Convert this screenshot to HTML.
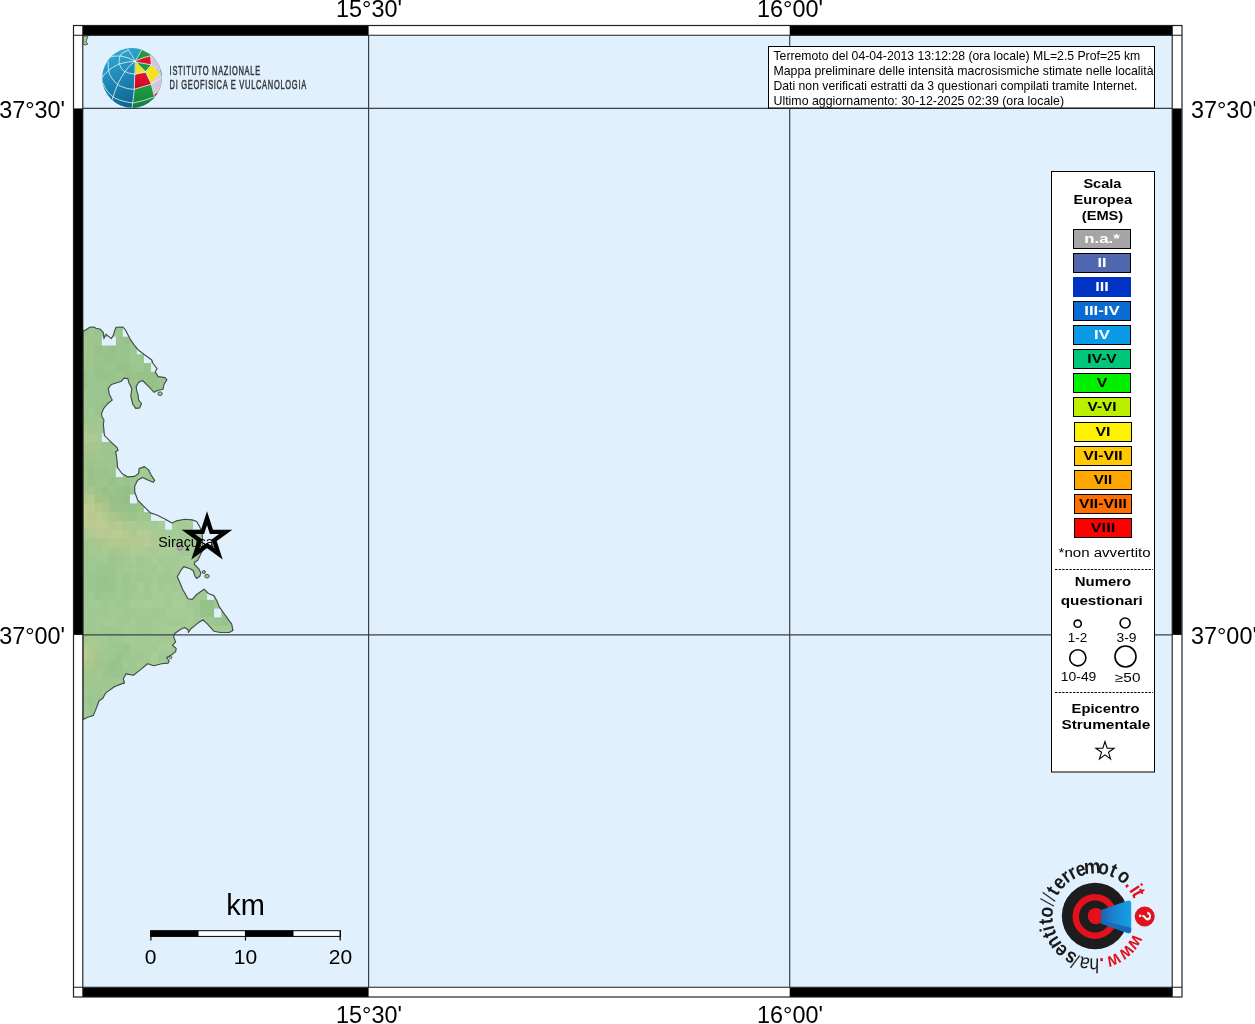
<!DOCTYPE html>
<html><head><meta charset="utf-8"><style>
html,body{margin:0;padding:0;background:#fff;width:1255px;height:1024px;overflow:hidden}
svg{display:block;will-change:transform}
text{font-family:"Liberation Sans",sans-serif}
</style></head><body>
<svg width="1255" height="1024" viewBox="0 0 1255 1024">
<defs>
<clipPath id="landclip"><path d="M83,330.7 L84.4,330.7 L89.8,327.3 L93.7,327 L96.1,328.3 L100.5,329.3 L103.4,332.7 L103.9,338.6 L105.9,334.2 L108.3,336.1 L111.3,338.6 L113.2,335.6 L114.7,330.7 L116.1,327.3 L123,327 L125.9,330.7 L129.8,338.6 L133.7,344.4 L138.6,350.3 L144.5,354.7 L151.8,360 L152.8,363 L157.1,368.8 L155.2,371.8 L158.1,376.6 L165,377.6 L166.9,379.6 L164,384.5 L163,389.3 L158.1,390.3 L154.2,392.3 L148.4,386.4 L142.5,380.5 L138.6,382.5 L136.2,386.4 L136.6,390.3 L138.1,395.2 L138.6,400.1 L141.5,403.5 L139.6,407.9 L135.7,408.4 L132.7,404 L130.8,396.2 L131.8,388.4 L128.8,382.5 L127.9,378.6 L124,378.1 L121,381.5 L111.3,384.5 L108.3,388.4 L109.3,394.2 L112.2,400.1 L107.3,404 L103.4,408.9 L101.5,413.9 L102,416.8 L103.9,419.8 L103.4,424.6 L104.4,435.4 L107.3,438.3 L112.2,443.2 L117.1,447.6 L118.1,450.5 L115.6,451.5 L116.1,453.9 L117.1,460.8 L117.6,467.6 L122,473.5 L127.9,476.9 L134.7,476.4 L138.6,473.5 L139.1,468.6 L144.5,466.6 L148.4,469.6 L151.3,475.4 L154.7,480.3 L153.2,482.3 L148.4,480.3 L142.5,477.4 L137.6,480.3 L134.7,486.2 L134.7,492 L137.6,499.8 L142.9,505.4 L150.4,512.9 L156.9,515 L165.4,519.3 L171.9,523.1 L176.2,520.9 L184.8,519.3 L192.3,519.9 L196.6,521.5 L199.8,526.9 L202,532.2 L203,549.4 L199.8,555.9 L197.7,560.2 L194.5,562.3 L194.5,564.5 L198.8,568.8 L200.9,573 L199.8,576.3 L196.6,578.4 L194.5,575.2 L193.4,570.9 L190.2,568.8 L183.7,566.6 L180.5,570.9 L177.3,576.8 L179.4,581.6 L182.6,589.2 L188,598.8 L192.3,599.4 L196.6,594.5 L204.1,589.2 L208.4,593.5 L213.8,595.6 L217,601 L219,606.4 L225.3,615.3 L231.7,624.2 L233,630.6 L229.2,632.5 L220.2,632.5 L213.9,631.2 L207.5,624.2 L203,619.8 L197.3,623.6 L190.9,628.7 L188.4,632.5 L188.4,630 L184.5,627.4 L180.7,629.3 L174.3,633.8 L173.7,637 L175.6,642.1 L172.4,645.3 L176.2,648.4 L175.6,651.6 L171.8,654.8 L166.7,657.4 L169.2,661.2 L168,663.1 L161.6,663.7 L153.9,665.7 L147.6,663.7 L139.9,670.1 L133.5,675.2 L125.9,673.9 L123.3,679 L124.6,682.9 L120.8,684.1 L114.4,686.7 L105.5,693.1 L102.9,698.2 L99.1,700.7 L95.3,710.9 L93.4,715.4 L87.6,717.3 L83.8,719.2 L83,719.5 Z"/></clipPath>
<clipPath id="mapclip"><rect x="83" y="36" width="1089" height="951"/></clipPath>
<linearGradient id="blueg" x1="0" y1="0" x2="1" y2="0">
<stop offset="0" stop-color="#1a64b4"/><stop offset="0.45" stop-color="#1a86d2"/><stop offset="1" stop-color="#14a0e6"/>
</linearGradient>
<linearGradient id="globeb" x1="0.2" y1="0" x2="0.6" y2="1">
<stop offset="0" stop-color="#34aed6"/><stop offset="0.55" stop-color="#1a82b0"/><stop offset="1" stop-color="#0a5a84"/>
</linearGradient>
<linearGradient id="redg" x1="0" y1="0" x2="0" y2="1"><stop offset="0" stop-color="#ec1028"/><stop offset="1" stop-color="#c40a2a"/></linearGradient>
<linearGradient id="greeng" x1="0" y1="0" x2="0" y2="1"><stop offset="0" stop-color="#22a03c"/><stop offset="1" stop-color="#0e7a44"/></linearGradient>
<clipPath id="globeclip"><circle cx="132" cy="77.9" r="29.8"/></clipPath>
<path id="hsitcirc" d="M 1095,916 m 34,20 A 39.5,39.5 0 1 1 1129.2,935.8"/>
</defs>
<!-- sea -->
<rect x="83" y="36" width="1089" height="951" fill="#e0f1fd"/>
<g clip-path="url(#mapclip)">
<path d="M83,330.7 L84.4,330.7 L89.8,327.3 L93.7,327 L96.1,328.3 L100.5,329.3 L103.4,332.7 L103.9,338.6 L105.9,334.2 L108.3,336.1 L111.3,338.6 L113.2,335.6 L114.7,330.7 L116.1,327.3 L123,327 L125.9,330.7 L129.8,338.6 L133.7,344.4 L138.6,350.3 L144.5,354.7 L151.8,360 L152.8,363 L157.1,368.8 L155.2,371.8 L158.1,376.6 L165,377.6 L166.9,379.6 L164,384.5 L163,389.3 L158.1,390.3 L154.2,392.3 L148.4,386.4 L142.5,380.5 L138.6,382.5 L136.2,386.4 L136.6,390.3 L138.1,395.2 L138.6,400.1 L141.5,403.5 L139.6,407.9 L135.7,408.4 L132.7,404 L130.8,396.2 L131.8,388.4 L128.8,382.5 L127.9,378.6 L124,378.1 L121,381.5 L111.3,384.5 L108.3,388.4 L109.3,394.2 L112.2,400.1 L107.3,404 L103.4,408.9 L101.5,413.9 L102,416.8 L103.9,419.8 L103.4,424.6 L104.4,435.4 L107.3,438.3 L112.2,443.2 L117.1,447.6 L118.1,450.5 L115.6,451.5 L116.1,453.9 L117.1,460.8 L117.6,467.6 L122,473.5 L127.9,476.9 L134.7,476.4 L138.6,473.5 L139.1,468.6 L144.5,466.6 L148.4,469.6 L151.3,475.4 L154.7,480.3 L153.2,482.3 L148.4,480.3 L142.5,477.4 L137.6,480.3 L134.7,486.2 L134.7,492 L137.6,499.8 L142.9,505.4 L150.4,512.9 L156.9,515 L165.4,519.3 L171.9,523.1 L176.2,520.9 L184.8,519.3 L192.3,519.9 L196.6,521.5 L199.8,526.9 L202,532.2 L203,549.4 L199.8,555.9 L197.7,560.2 L194.5,562.3 L194.5,564.5 L198.8,568.8 L200.9,573 L199.8,576.3 L196.6,578.4 L194.5,575.2 L193.4,570.9 L190.2,568.8 L183.7,566.6 L180.5,570.9 L177.3,576.8 L179.4,581.6 L182.6,589.2 L188,598.8 L192.3,599.4 L196.6,594.5 L204.1,589.2 L208.4,593.5 L213.8,595.6 L217,601 L219,606.4 L225.3,615.3 L231.7,624.2 L233,630.6 L229.2,632.5 L220.2,632.5 L213.9,631.2 L207.5,624.2 L203,619.8 L197.3,623.6 L190.9,628.7 L188.4,632.5 L188.4,630 L184.5,627.4 L180.7,629.3 L174.3,633.8 L173.7,637 L175.6,642.1 L172.4,645.3 L176.2,648.4 L175.6,651.6 L171.8,654.8 L166.7,657.4 L169.2,661.2 L168,663.1 L161.6,663.7 L153.9,665.7 L147.6,663.7 L139.9,670.1 L133.5,675.2 L125.9,673.9 L123.3,679 L124.6,682.9 L120.8,684.1 L114.4,686.7 L105.5,693.1 L102.9,698.2 L99.1,700.7 L95.3,710.9 L93.4,715.4 L87.6,717.3 L83.8,719.2 L83,719.5 Z" fill="#a4cb96"/>
<g clip-path="url(#landclip)">
<rect x="73.76" y="319.18" width="7.02" height="8.77" fill="#9fc791"/>
<rect x="80.78" y="319.18" width="7.02" height="8.77" fill="#9fc892"/>
<rect x="87.80" y="319.18" width="7.02" height="8.77" fill="#9dc690"/>
<rect x="94.82" y="319.18" width="7.02" height="8.77" fill="#9dc790"/>
<rect x="101.84" y="319.18" width="7.02" height="8.77" fill="#9dc690"/>
<rect x="108.86" y="319.18" width="14.04" height="8.77" fill="#9ac38c"/>
<rect x="122.90" y="319.18" width="7.02" height="8.77" fill="#a0c992"/>
<rect x="129.92" y="319.18" width="7.02" height="8.77" fill="#9dc690"/>
<rect x="136.94" y="319.18" width="7.02" height="8.77" fill="#9fc791"/>
<rect x="143.96" y="319.18" width="7.02" height="8.77" fill="#a4cc97"/>
<rect x="150.98" y="319.18" width="7.02" height="8.77" fill="#a2ca94"/>
<rect x="158.00" y="319.18" width="7.02" height="8.77" fill="#a5cc97"/>
<rect x="165.02" y="319.18" width="7.02" height="8.77" fill="#a3ca95"/>
<rect x="172.04" y="319.18" width="7.02" height="8.77" fill="#a5cc97"/>
<rect x="179.06" y="319.18" width="7.02" height="8.77" fill="#a2c994"/>
<rect x="186.08" y="319.18" width="7.02" height="8.77" fill="#a5cc97"/>
<rect x="193.10" y="319.18" width="7.02" height="8.77" fill="#a6cd98"/>
<rect x="200.12" y="319.18" width="7.02" height="8.77" fill="#a4cb96"/>
<rect x="207.14" y="319.18" width="14.04" height="8.77" fill="#a5cc97"/>
<rect x="221.18" y="319.18" width="7.02" height="8.77" fill="#a1c893"/>
<rect x="228.20" y="319.18" width="7.02" height="8.77" fill="#a6cd98"/>
<rect x="235.22" y="319.18" width="7.02" height="8.77" fill="#a5cc97"/>
<rect x="73.76" y="327.95" width="7.02" height="8.77" fill="#9ec690"/>
<rect x="80.78" y="327.95" width="7.02" height="8.77" fill="#9bc48d"/>
<rect x="87.80" y="327.95" width="7.02" height="8.77" fill="#9ec791"/>
<rect x="94.82" y="327.95" width="7.02" height="8.77" fill="#9ac48d"/>
<rect x="101.84" y="327.95" width="7.02" height="8.77" fill="#9bc58e"/>
<rect x="108.86" y="327.95" width="14.04" height="8.77" fill="#9cc68f"/>
<rect x="122.90" y="327.95" width="7.02" height="8.77" fill="#9ec891"/>
<rect x="129.92" y="327.95" width="7.02" height="8.77" fill="#9dc68f"/>
<rect x="136.94" y="327.95" width="7.02" height="8.77" fill="#a1c993"/>
<rect x="143.96" y="327.95" width="7.02" height="8.77" fill="#a0c893"/>
<rect x="150.98" y="327.95" width="7.02" height="8.77" fill="#a4cc97"/>
<rect x="158.00" y="327.95" width="7.02" height="8.77" fill="#a5cc97"/>
<rect x="165.02" y="327.95" width="7.02" height="8.77" fill="#a1c893"/>
<rect x="172.04" y="327.95" width="7.02" height="8.77" fill="#a1c994"/>
<rect x="179.06" y="327.95" width="7.02" height="8.77" fill="#a2c994"/>
<rect x="186.08" y="327.95" width="7.02" height="8.77" fill="#a7ce99"/>
<rect x="193.10" y="327.95" width="7.02" height="8.77" fill="#a4cb96"/>
<rect x="200.12" y="327.95" width="7.02" height="8.77" fill="#a5cc97"/>
<rect x="207.14" y="327.95" width="7.02" height="8.77" fill="#a3ca95"/>
<rect x="214.16" y="327.95" width="7.02" height="8.77" fill="#a4cb96"/>
<rect x="221.18" y="327.95" width="14.04" height="8.77" fill="#a3ca95"/>
<rect x="235.22" y="327.95" width="7.02" height="8.77" fill="#a5cc97"/>
<rect x="73.76" y="336.72" width="7.02" height="8.77" fill="#9fc791"/>
<rect x="80.78" y="336.72" width="7.02" height="8.77" fill="#a0c891"/>
<rect x="87.80" y="336.72" width="7.02" height="8.77" fill="#9cc58e"/>
<rect x="94.82" y="336.72" width="7.02" height="8.77" fill="#9cc68f"/>
<rect x="101.84" y="336.72" width="7.02" height="8.77" fill="#9bc58d"/>
<rect x="108.86" y="336.72" width="7.02" height="8.77" fill="#9bc68e"/>
<rect x="115.88" y="336.72" width="7.02" height="8.77" fill="#9ac48d"/>
<rect x="122.90" y="336.72" width="7.02" height="8.77" fill="#99c28b"/>
<rect x="129.92" y="336.72" width="7.02" height="8.77" fill="#9fc891"/>
<rect x="136.94" y="336.72" width="7.02" height="8.77" fill="#a1ca94"/>
<rect x="143.96" y="336.72" width="7.02" height="8.77" fill="#a2cb95"/>
<rect x="150.98" y="336.72" width="7.02" height="8.77" fill="#a2ca94"/>
<rect x="158.00" y="336.72" width="7.02" height="8.77" fill="#a4cb96"/>
<rect x="165.02" y="336.72" width="7.02" height="8.77" fill="#a1c994"/>
<rect x="172.04" y="336.72" width="7.02" height="8.77" fill="#a6cd98"/>
<rect x="179.06" y="336.72" width="7.02" height="8.77" fill="#a4cb96"/>
<rect x="186.08" y="336.72" width="7.02" height="8.77" fill="#a3ca95"/>
<rect x="193.10" y="336.72" width="7.02" height="8.77" fill="#a1c893"/>
<rect x="200.12" y="336.72" width="7.02" height="8.77" fill="#a6cd98"/>
<rect x="207.14" y="336.72" width="7.02" height="8.77" fill="#a7ce99"/>
<rect x="214.16" y="336.72" width="7.02" height="8.77" fill="#a2c994"/>
<rect x="221.18" y="336.72" width="7.02" height="8.77" fill="#a6cd98"/>
<rect x="228.20" y="336.72" width="7.02" height="8.77" fill="#a3ca95"/>
<rect x="235.22" y="336.72" width="7.02" height="8.77" fill="#a2c994"/>
<rect x="73.76" y="345.49" width="7.02" height="8.77" fill="#a0c58e"/>
<rect x="80.78" y="345.49" width="7.02" height="8.77" fill="#a3c78f"/>
<rect x="87.80" y="345.49" width="7.02" height="8.77" fill="#a0c68e"/>
<rect x="94.82" y="345.49" width="7.02" height="8.77" fill="#97c088"/>
<rect x="101.84" y="345.49" width="7.02" height="8.77" fill="#99c38b"/>
<rect x="108.86" y="345.49" width="7.02" height="8.77" fill="#95c088"/>
<rect x="115.88" y="345.49" width="7.02" height="8.77" fill="#9ac48d"/>
<rect x="122.90" y="345.49" width="7.02" height="8.77" fill="#99c38c"/>
<rect x="129.92" y="345.49" width="7.02" height="8.77" fill="#9ec891"/>
<rect x="136.94" y="345.49" width="7.02" height="8.77" fill="#a1c993"/>
<rect x="143.96" y="345.49" width="7.02" height="8.77" fill="#9fc892"/>
<rect x="150.98" y="345.49" width="7.02" height="8.77" fill="#a4cc96"/>
<rect x="158.00" y="345.49" width="7.02" height="8.77" fill="#a1c993"/>
<rect x="165.02" y="345.49" width="7.02" height="8.77" fill="#a0c893"/>
<rect x="172.04" y="345.49" width="7.02" height="8.77" fill="#a4cb96"/>
<rect x="179.06" y="345.49" width="7.02" height="8.77" fill="#a1c893"/>
<rect x="186.08" y="345.49" width="7.02" height="8.77" fill="#a2c994"/>
<rect x="193.10" y="345.49" width="7.02" height="8.77" fill="#a3ca95"/>
<rect x="200.12" y="345.49" width="7.02" height="8.77" fill="#a5cc97"/>
<rect x="207.14" y="345.49" width="7.02" height="8.77" fill="#a2c994"/>
<rect x="214.16" y="345.49" width="7.02" height="8.77" fill="#a1c893"/>
<rect x="221.18" y="345.49" width="7.02" height="8.77" fill="#a6cd98"/>
<rect x="228.20" y="345.49" width="7.02" height="8.77" fill="#a3ca95"/>
<rect x="235.22" y="345.49" width="7.02" height="8.77" fill="#a7ce99"/>
<rect x="73.76" y="354.26" width="7.02" height="8.77" fill="#a4c891"/>
<rect x="80.78" y="354.26" width="7.02" height="8.77" fill="#a3c48c"/>
<rect x="87.80" y="354.26" width="7.02" height="8.77" fill="#a0c48b"/>
<rect x="94.82" y="354.26" width="7.02" height="8.77" fill="#9bc38b"/>
<rect x="101.84" y="354.26" width="14.04" height="8.77" fill="#99c38c"/>
<rect x="115.88" y="354.26" width="7.02" height="8.77" fill="#99c48c"/>
<rect x="122.90" y="354.26" width="7.02" height="8.77" fill="#9bc58e"/>
<rect x="129.92" y="354.26" width="7.02" height="8.77" fill="#9ec891"/>
<rect x="136.94" y="354.26" width="7.02" height="8.77" fill="#9dc68f"/>
<rect x="143.96" y="354.26" width="7.02" height="8.77" fill="#9dc690"/>
<rect x="150.98" y="354.26" width="7.02" height="8.77" fill="#a0c993"/>
<rect x="158.00" y="354.26" width="7.02" height="8.77" fill="#9fc791"/>
<rect x="165.02" y="354.26" width="7.02" height="8.77" fill="#a1c993"/>
<rect x="172.04" y="354.26" width="7.02" height="8.77" fill="#a6cd98"/>
<rect x="179.06" y="354.26" width="14.04" height="8.77" fill="#a4cb96"/>
<rect x="193.10" y="354.26" width="7.02" height="8.77" fill="#a1c893"/>
<rect x="200.12" y="354.26" width="7.02" height="8.77" fill="#a3ca95"/>
<rect x="207.14" y="354.26" width="7.02" height="8.77" fill="#a4cb96"/>
<rect x="214.16" y="354.26" width="7.02" height="8.77" fill="#a1c893"/>
<rect x="221.18" y="354.26" width="14.04" height="8.77" fill="#a5cc97"/>
<rect x="235.22" y="354.26" width="7.02" height="8.77" fill="#a1c893"/>
<rect x="73.76" y="363.03" width="7.02" height="8.77" fill="#9fc68f"/>
<rect x="80.78" y="363.03" width="14.04" height="8.77" fill="#9ec58d"/>
<rect x="94.82" y="363.03" width="7.02" height="8.77" fill="#99c28b"/>
<rect x="101.84" y="363.03" width="7.02" height="8.77" fill="#9ac48d"/>
<rect x="108.86" y="363.03" width="7.02" height="8.77" fill="#9ac58d"/>
<rect x="115.88" y="363.03" width="7.02" height="8.77" fill="#97c18a"/>
<rect x="122.90" y="363.03" width="7.02" height="8.77" fill="#98c28b"/>
<rect x="129.92" y="363.03" width="7.02" height="8.77" fill="#9cc68f"/>
<rect x="136.94" y="363.03" width="7.02" height="8.77" fill="#9dc790"/>
<rect x="143.96" y="363.03" width="7.02" height="8.77" fill="#98c28b"/>
<rect x="150.98" y="363.03" width="7.02" height="8.77" fill="#9ac48d"/>
<rect x="158.00" y="363.03" width="7.02" height="8.77" fill="#9ec791"/>
<rect x="165.02" y="363.03" width="7.02" height="8.77" fill="#a0c892"/>
<rect x="172.04" y="363.03" width="7.02" height="8.77" fill="#a2c994"/>
<rect x="179.06" y="363.03" width="7.02" height="8.77" fill="#a2ca95"/>
<rect x="186.08" y="363.03" width="7.02" height="8.77" fill="#a3ca95"/>
<rect x="193.10" y="363.03" width="7.02" height="8.77" fill="#a5cc97"/>
<rect x="200.12" y="363.03" width="14.04" height="8.77" fill="#a3ca95"/>
<rect x="214.16" y="363.03" width="7.02" height="8.77" fill="#a6cd98"/>
<rect x="221.18" y="363.03" width="7.02" height="8.77" fill="#a1c893"/>
<rect x="228.20" y="363.03" width="7.02" height="8.77" fill="#a4cb96"/>
<rect x="235.22" y="363.03" width="7.02" height="8.77" fill="#a5cc97"/>
<rect x="73.76" y="371.80" width="7.02" height="8.77" fill="#9bc48e"/>
<rect x="80.78" y="371.80" width="7.02" height="8.77" fill="#9ac38c"/>
<rect x="87.80" y="371.80" width="7.02" height="8.77" fill="#9cc68f"/>
<rect x="94.82" y="371.80" width="7.02" height="8.77" fill="#98c28b"/>
<rect x="101.84" y="371.80" width="7.02" height="8.77" fill="#98c28a"/>
<rect x="108.86" y="371.80" width="7.02" height="8.77" fill="#9ac38c"/>
<rect x="115.88" y="371.80" width="7.02" height="8.77" fill="#9cc68f"/>
<rect x="122.90" y="371.80" width="7.02" height="8.77" fill="#99c28b"/>
<rect x="129.92" y="371.80" width="7.02" height="8.77" fill="#99c38c"/>
<rect x="136.94" y="371.80" width="7.02" height="8.77" fill="#96c189"/>
<rect x="143.96" y="371.80" width="7.02" height="8.77" fill="#97c38a"/>
<rect x="150.98" y="371.80" width="7.02" height="8.77" fill="#96c189"/>
<rect x="158.00" y="371.80" width="7.02" height="8.77" fill="#9dc68f"/>
<rect x="165.02" y="371.80" width="7.02" height="8.77" fill="#9dc690"/>
<rect x="172.04" y="371.80" width="7.02" height="8.77" fill="#a1c993"/>
<rect x="179.06" y="371.80" width="7.02" height="8.77" fill="#a4cc96"/>
<rect x="186.08" y="371.80" width="7.02" height="8.77" fill="#a6cd98"/>
<rect x="193.10" y="371.80" width="7.02" height="8.77" fill="#a4cb96"/>
<rect x="200.12" y="371.80" width="14.04" height="8.77" fill="#a2c994"/>
<rect x="214.16" y="371.80" width="7.02" height="8.77" fill="#a4cb96"/>
<rect x="221.18" y="371.80" width="7.02" height="8.77" fill="#a2c994"/>
<rect x="228.20" y="371.80" width="14.04" height="8.77" fill="#a6cd98"/>
<rect x="73.76" y="380.57" width="7.02" height="8.77" fill="#9ac48d"/>
<rect x="80.78" y="380.57" width="7.02" height="8.77" fill="#9ac38c"/>
<rect x="87.80" y="380.57" width="7.02" height="8.77" fill="#9cc68f"/>
<rect x="94.82" y="380.57" width="7.02" height="8.77" fill="#9bc58e"/>
<rect x="101.84" y="380.57" width="7.02" height="8.77" fill="#9cc68f"/>
<rect x="108.86" y="380.57" width="7.02" height="8.77" fill="#9ac48d"/>
<rect x="115.88" y="380.57" width="7.02" height="8.77" fill="#99c38c"/>
<rect x="122.90" y="380.57" width="7.02" height="8.77" fill="#9bc48d"/>
<rect x="129.92" y="380.57" width="7.02" height="8.77" fill="#9cc68f"/>
<rect x="136.94" y="380.57" width="7.02" height="8.77" fill="#97c18a"/>
<rect x="143.96" y="380.57" width="7.02" height="8.77" fill="#95c088"/>
<rect x="150.98" y="380.57" width="7.02" height="8.77" fill="#96c189"/>
<rect x="158.00" y="380.57" width="7.02" height="8.77" fill="#9ac48d"/>
<rect x="165.02" y="380.57" width="7.02" height="8.77" fill="#9fc791"/>
<rect x="172.04" y="380.57" width="7.02" height="8.77" fill="#a5cc97"/>
<rect x="179.06" y="380.57" width="7.02" height="8.77" fill="#a1c993"/>
<rect x="186.08" y="380.57" width="7.02" height="8.77" fill="#a1c893"/>
<rect x="193.10" y="380.57" width="7.02" height="8.77" fill="#a7ce99"/>
<rect x="200.12" y="380.57" width="7.02" height="8.77" fill="#a6cd98"/>
<rect x="207.14" y="380.57" width="7.02" height="8.77" fill="#a7ce99"/>
<rect x="214.16" y="380.57" width="7.02" height="8.77" fill="#a4cb96"/>
<rect x="221.18" y="380.57" width="14.04" height="8.77" fill="#a7ce99"/>
<rect x="235.22" y="380.57" width="7.02" height="8.77" fill="#a2c994"/>
<rect x="73.76" y="389.34" width="7.02" height="8.77" fill="#9ec791"/>
<rect x="80.78" y="389.34" width="7.02" height="8.77" fill="#9ec790"/>
<rect x="87.80" y="389.34" width="7.02" height="8.77" fill="#9cc68f"/>
<rect x="94.82" y="389.34" width="7.02" height="8.77" fill="#9bc58e"/>
<rect x="101.84" y="389.34" width="7.02" height="8.77" fill="#9ac38d"/>
<rect x="108.86" y="389.34" width="14.04" height="8.77" fill="#9bc48e"/>
<rect x="122.90" y="389.34" width="7.02" height="8.77" fill="#9bc48d"/>
<rect x="129.92" y="389.34" width="7.02" height="8.77" fill="#9ec790"/>
<rect x="136.94" y="389.34" width="7.02" height="8.77" fill="#9bc48d"/>
<rect x="143.96" y="389.34" width="7.02" height="8.77" fill="#9dc790"/>
<rect x="150.98" y="389.34" width="7.02" height="8.77" fill="#99c38c"/>
<rect x="158.00" y="389.34" width="7.02" height="8.77" fill="#a1ca93"/>
<rect x="165.02" y="389.34" width="7.02" height="8.77" fill="#a2ca95"/>
<rect x="172.04" y="389.34" width="7.02" height="8.77" fill="#a5cd98"/>
<rect x="179.06" y="389.34" width="14.04" height="8.77" fill="#a6cd98"/>
<rect x="193.10" y="389.34" width="7.02" height="8.77" fill="#a4cb96"/>
<rect x="200.12" y="389.34" width="7.02" height="8.77" fill="#a1c893"/>
<rect x="207.14" y="389.34" width="7.02" height="8.77" fill="#a5cc97"/>
<rect x="214.16" y="389.34" width="7.02" height="8.77" fill="#a2c994"/>
<rect x="221.18" y="389.34" width="7.02" height="8.77" fill="#a3ca95"/>
<rect x="228.20" y="389.34" width="7.02" height="8.77" fill="#a5cc97"/>
<rect x="235.22" y="389.34" width="7.02" height="8.77" fill="#a4cb96"/>
<rect x="73.76" y="398.11" width="7.02" height="8.77" fill="#9dc68f"/>
<rect x="80.78" y="398.11" width="7.02" height="8.77" fill="#9fc892"/>
<rect x="87.80" y="398.11" width="7.02" height="8.77" fill="#9dc68f"/>
<rect x="94.82" y="398.11" width="7.02" height="8.77" fill="#9bc48e"/>
<rect x="101.84" y="398.11" width="7.02" height="8.77" fill="#9bc48d"/>
<rect x="108.86" y="398.11" width="7.02" height="8.77" fill="#9fc892"/>
<rect x="115.88" y="398.11" width="7.02" height="8.77" fill="#9ec790"/>
<rect x="122.90" y="398.11" width="7.02" height="8.77" fill="#a0c993"/>
<rect x="129.92" y="398.11" width="7.02" height="8.77" fill="#9ec791"/>
<rect x="136.94" y="398.11" width="7.02" height="8.77" fill="#9ec690"/>
<rect x="143.96" y="398.11" width="7.02" height="8.77" fill="#a0c892"/>
<rect x="150.98" y="398.11" width="7.02" height="8.77" fill="#a2ca95"/>
<rect x="158.00" y="398.11" width="7.02" height="8.77" fill="#a0c792"/>
<rect x="165.02" y="398.11" width="7.02" height="8.77" fill="#a5cc97"/>
<rect x="172.04" y="398.11" width="21.06" height="8.77" fill="#a6cd98"/>
<rect x="193.10" y="398.11" width="7.02" height="8.77" fill="#a1c893"/>
<rect x="200.12" y="398.11" width="7.02" height="8.77" fill="#a5cc97"/>
<rect x="207.14" y="398.11" width="7.02" height="8.77" fill="#a6cd98"/>
<rect x="214.16" y="398.11" width="7.02" height="8.77" fill="#a1c893"/>
<rect x="221.18" y="398.11" width="14.04" height="8.77" fill="#a3ca95"/>
<rect x="235.22" y="398.11" width="7.02" height="8.77" fill="#a4cb96"/>
<rect x="73.76" y="406.88" width="7.02" height="8.77" fill="#9ec790"/>
<rect x="80.78" y="406.88" width="7.02" height="8.77" fill="#9ec690"/>
<rect x="87.80" y="406.88" width="7.02" height="8.77" fill="#9fc892"/>
<rect x="94.82" y="406.88" width="7.02" height="8.77" fill="#9ac38d"/>
<rect x="101.84" y="406.88" width="7.02" height="8.77" fill="#9bc48d"/>
<rect x="108.86" y="406.88" width="7.02" height="8.77" fill="#9cc58e"/>
<rect x="115.88" y="406.88" width="7.02" height="8.77" fill="#9dc58f"/>
<rect x="122.90" y="406.88" width="7.02" height="8.77" fill="#9dc690"/>
<rect x="129.92" y="406.88" width="7.02" height="8.77" fill="#a4cc96"/>
<rect x="136.94" y="406.88" width="7.02" height="8.77" fill="#a4cb96"/>
<rect x="143.96" y="406.88" width="7.02" height="8.77" fill="#a0c792"/>
<rect x="150.98" y="406.88" width="7.02" height="8.77" fill="#a3ca95"/>
<rect x="158.00" y="406.88" width="7.02" height="8.77" fill="#a2c994"/>
<rect x="165.02" y="406.88" width="7.02" height="8.77" fill="#a2ca94"/>
<rect x="172.04" y="406.88" width="7.02" height="8.77" fill="#a3ca95"/>
<rect x="179.06" y="406.88" width="7.02" height="8.77" fill="#a5cc97"/>
<rect x="186.08" y="406.88" width="7.02" height="8.77" fill="#a4cb96"/>
<rect x="193.10" y="406.88" width="7.02" height="8.77" fill="#a3ca95"/>
<rect x="200.12" y="406.88" width="7.02" height="8.77" fill="#a2c994"/>
<rect x="207.14" y="406.88" width="7.02" height="8.77" fill="#a3ca95"/>
<rect x="214.16" y="406.88" width="7.02" height="8.77" fill="#a2c994"/>
<rect x="221.18" y="406.88" width="7.02" height="8.77" fill="#a4cb96"/>
<rect x="228.20" y="406.88" width="7.02" height="8.77" fill="#a5cc97"/>
<rect x="235.22" y="406.88" width="7.02" height="8.77" fill="#a3ca95"/>
<rect x="73.76" y="415.65" width="7.02" height="8.77" fill="#9dc58f"/>
<rect x="80.78" y="415.65" width="7.02" height="8.77" fill="#9ec68f"/>
<rect x="87.80" y="415.65" width="7.02" height="8.77" fill="#9ec690"/>
<rect x="94.82" y="415.65" width="7.02" height="8.77" fill="#9fc892"/>
<rect x="101.84" y="415.65" width="7.02" height="8.77" fill="#a1c993"/>
<rect x="108.86" y="415.65" width="7.02" height="8.77" fill="#9fc791"/>
<rect x="115.88" y="415.65" width="14.04" height="8.77" fill="#a2ca94"/>
<rect x="129.92" y="415.65" width="7.02" height="8.77" fill="#a1c993"/>
<rect x="136.94" y="415.65" width="7.02" height="8.77" fill="#a2c994"/>
<rect x="143.96" y="415.65" width="7.02" height="8.77" fill="#a3ca95"/>
<rect x="150.98" y="415.65" width="7.02" height="8.77" fill="#a4cc96"/>
<rect x="158.00" y="415.65" width="7.02" height="8.77" fill="#a3ca95"/>
<rect x="165.02" y="415.65" width="7.02" height="8.77" fill="#a5cc97"/>
<rect x="172.04" y="415.65" width="7.02" height="8.77" fill="#a4cb96"/>
<rect x="179.06" y="415.65" width="7.02" height="8.77" fill="#a2c994"/>
<rect x="186.08" y="415.65" width="7.02" height="8.77" fill="#a4cb96"/>
<rect x="193.10" y="415.65" width="7.02" height="8.77" fill="#a5cc97"/>
<rect x="200.12" y="415.65" width="7.02" height="8.77" fill="#a1c893"/>
<rect x="207.14" y="415.65" width="14.04" height="8.77" fill="#a4cb96"/>
<rect x="221.18" y="415.65" width="7.02" height="8.77" fill="#a6cd98"/>
<rect x="228.20" y="415.65" width="7.02" height="8.77" fill="#a7ce99"/>
<rect x="235.22" y="415.65" width="7.02" height="8.77" fill="#a3ca95"/>
<rect x="73.76" y="424.42" width="7.02" height="8.77" fill="#a6cb95"/>
<rect x="80.78" y="424.42" width="7.02" height="8.77" fill="#aaca93"/>
<rect x="87.80" y="424.42" width="7.02" height="8.77" fill="#a4c790"/>
<rect x="94.82" y="424.42" width="7.02" height="8.77" fill="#a1c892"/>
<rect x="101.84" y="424.42" width="7.02" height="8.77" fill="#9ec690"/>
<rect x="108.86" y="424.42" width="7.02" height="8.77" fill="#a2ca95"/>
<rect x="115.88" y="424.42" width="7.02" height="8.77" fill="#a2ca94"/>
<rect x="122.90" y="424.42" width="14.04" height="8.77" fill="#a4cc96"/>
<rect x="136.94" y="424.42" width="7.02" height="8.77" fill="#a4cb96"/>
<rect x="143.96" y="424.42" width="7.02" height="8.77" fill="#a5cc97"/>
<rect x="150.98" y="424.42" width="7.02" height="8.77" fill="#a4cb96"/>
<rect x="158.00" y="424.42" width="7.02" height="8.77" fill="#a1c893"/>
<rect x="165.02" y="424.42" width="7.02" height="8.77" fill="#a4cb96"/>
<rect x="172.04" y="424.42" width="7.02" height="8.77" fill="#a1c893"/>
<rect x="179.06" y="424.42" width="7.02" height="8.77" fill="#a2c994"/>
<rect x="186.08" y="424.42" width="7.02" height="8.77" fill="#a6cd98"/>
<rect x="193.10" y="424.42" width="7.02" height="8.77" fill="#a1c893"/>
<rect x="200.12" y="424.42" width="14.04" height="8.77" fill="#a2c994"/>
<rect x="214.16" y="424.42" width="7.02" height="8.77" fill="#a6cd98"/>
<rect x="221.18" y="424.42" width="7.02" height="8.77" fill="#a2c994"/>
<rect x="228.20" y="424.42" width="7.02" height="8.77" fill="#a1c893"/>
<rect x="235.22" y="424.42" width="7.02" height="8.77" fill="#a6cd98"/>
<rect x="73.76" y="433.19" width="7.02" height="8.77" fill="#a6c78f"/>
<rect x="80.78" y="433.19" width="7.02" height="8.77" fill="#b4cb92"/>
<rect x="87.80" y="433.19" width="7.02" height="8.77" fill="#aec991"/>
<rect x="94.82" y="433.19" width="7.02" height="8.77" fill="#a5ca93"/>
<rect x="101.84" y="433.19" width="7.02" height="8.77" fill="#a3cb95"/>
<rect x="108.86" y="433.19" width="7.02" height="8.77" fill="#a1c994"/>
<rect x="115.88" y="433.19" width="7.02" height="8.77" fill="#a3cb96"/>
<rect x="122.90" y="433.19" width="7.02" height="8.77" fill="#9fc792"/>
<rect x="129.92" y="433.19" width="7.02" height="8.77" fill="#a4cc96"/>
<rect x="136.94" y="433.19" width="7.02" height="8.77" fill="#a3ca95"/>
<rect x="143.96" y="433.19" width="7.02" height="8.77" fill="#a5cc97"/>
<rect x="150.98" y="433.19" width="7.02" height="8.77" fill="#a1c893"/>
<rect x="158.00" y="433.19" width="7.02" height="8.77" fill="#a5cc97"/>
<rect x="165.02" y="433.19" width="7.02" height="8.77" fill="#a6ce98"/>
<rect x="172.04" y="433.19" width="7.02" height="8.77" fill="#a1c893"/>
<rect x="179.06" y="433.19" width="7.02" height="8.77" fill="#a3ca95"/>
<rect x="186.08" y="433.19" width="7.02" height="8.77" fill="#a4cb96"/>
<rect x="193.10" y="433.19" width="7.02" height="8.77" fill="#a6cd98"/>
<rect x="200.12" y="433.19" width="21.06" height="8.77" fill="#a2c994"/>
<rect x="221.18" y="433.19" width="7.02" height="8.77" fill="#a5cc97"/>
<rect x="228.20" y="433.19" width="7.02" height="8.77" fill="#a6cd98"/>
<rect x="235.22" y="433.19" width="7.02" height="8.77" fill="#a3ca95"/>
<rect x="73.76" y="441.96" width="7.02" height="8.77" fill="#a8c790"/>
<rect x="80.78" y="441.96" width="7.02" height="8.77" fill="#acc78e"/>
<rect x="87.80" y="441.96" width="7.02" height="8.77" fill="#a9c68e"/>
<rect x="94.82" y="441.96" width="7.02" height="8.77" fill="#a3c78f"/>
<rect x="101.84" y="441.96" width="7.02" height="8.77" fill="#9ec58f"/>
<rect x="108.86" y="441.96" width="7.02" height="8.77" fill="#a0c892"/>
<rect x="115.88" y="441.96" width="7.02" height="8.77" fill="#a4cc96"/>
<rect x="122.90" y="441.96" width="7.02" height="8.77" fill="#a2c994"/>
<rect x="129.92" y="441.96" width="7.02" height="8.77" fill="#a4cc96"/>
<rect x="136.94" y="441.96" width="7.02" height="8.77" fill="#a1c893"/>
<rect x="143.96" y="441.96" width="21.06" height="8.77" fill="#a5cc97"/>
<rect x="165.02" y="441.96" width="14.04" height="8.77" fill="#a4cb96"/>
<rect x="179.06" y="441.96" width="7.02" height="8.77" fill="#a5cc97"/>
<rect x="186.08" y="441.96" width="7.02" height="8.77" fill="#a6cd98"/>
<rect x="193.10" y="441.96" width="14.04" height="8.77" fill="#a2c994"/>
<rect x="207.14" y="441.96" width="7.02" height="8.77" fill="#a5cc97"/>
<rect x="214.16" y="441.96" width="7.02" height="8.77" fill="#a6cd98"/>
<rect x="221.18" y="441.96" width="14.04" height="8.77" fill="#a4cb96"/>
<rect x="235.22" y="441.96" width="7.02" height="8.77" fill="#a5cc97"/>
<rect x="73.76" y="450.73" width="7.02" height="8.77" fill="#a4c58d"/>
<rect x="80.78" y="450.73" width="7.02" height="8.77" fill="#a6c48b"/>
<rect x="87.80" y="450.73" width="7.02" height="8.77" fill="#a3c38a"/>
<rect x="94.82" y="450.73" width="7.02" height="8.77" fill="#a1c68e"/>
<rect x="101.84" y="450.73" width="7.02" height="8.77" fill="#9dc58e"/>
<rect x="108.86" y="450.73" width="7.02" height="8.77" fill="#9dc68f"/>
<rect x="115.88" y="450.73" width="7.02" height="8.77" fill="#a2ca94"/>
<rect x="122.90" y="450.73" width="7.02" height="8.77" fill="#a4cc97"/>
<rect x="129.92" y="450.73" width="7.02" height="8.77" fill="#a1c993"/>
<rect x="136.94" y="450.73" width="7.02" height="8.77" fill="#a4cc96"/>
<rect x="143.96" y="450.73" width="7.02" height="8.77" fill="#a3ca95"/>
<rect x="150.98" y="450.73" width="7.02" height="8.77" fill="#a6cd98"/>
<rect x="158.00" y="450.73" width="7.02" height="8.77" fill="#a4cb96"/>
<rect x="165.02" y="450.73" width="7.02" height="8.77" fill="#a2ca94"/>
<rect x="172.04" y="450.73" width="7.02" height="8.77" fill="#a2c994"/>
<rect x="179.06" y="450.73" width="7.02" height="8.77" fill="#a1c893"/>
<rect x="186.08" y="450.73" width="7.02" height="8.77" fill="#a4cb96"/>
<rect x="193.10" y="450.73" width="7.02" height="8.77" fill="#a3ca95"/>
<rect x="200.12" y="450.73" width="7.02" height="8.77" fill="#a2c994"/>
<rect x="207.14" y="450.73" width="14.04" height="8.77" fill="#a3ca95"/>
<rect x="221.18" y="450.73" width="7.02" height="8.77" fill="#a6cd98"/>
<rect x="228.20" y="450.73" width="7.02" height="8.77" fill="#a2c994"/>
<rect x="235.22" y="450.73" width="7.02" height="8.77" fill="#a7ce99"/>
<rect x="73.76" y="459.50" width="7.02" height="8.77" fill="#9fc58e"/>
<rect x="80.78" y="459.50" width="7.02" height="8.77" fill="#9fc48c"/>
<rect x="87.80" y="459.50" width="7.02" height="8.77" fill="#9cc38b"/>
<rect x="94.82" y="459.50" width="7.02" height="8.77" fill="#9dc58d"/>
<rect x="101.84" y="459.50" width="7.02" height="8.77" fill="#9dc68f"/>
<rect x="108.86" y="459.50" width="7.02" height="8.77" fill="#9ec690"/>
<rect x="115.88" y="459.50" width="7.02" height="8.77" fill="#9fc791"/>
<rect x="122.90" y="459.50" width="7.02" height="8.77" fill="#a2ca94"/>
<rect x="129.92" y="459.50" width="7.02" height="8.77" fill="#a4cb96"/>
<rect x="136.94" y="459.50" width="7.02" height="8.77" fill="#a2c994"/>
<rect x="143.96" y="459.50" width="7.02" height="8.77" fill="#a4cc96"/>
<rect x="150.98" y="459.50" width="7.02" height="8.77" fill="#a6cd98"/>
<rect x="158.00" y="459.50" width="7.02" height="8.77" fill="#a3ca95"/>
<rect x="165.02" y="459.50" width="14.04" height="8.77" fill="#a2c994"/>
<rect x="179.06" y="459.50" width="14.04" height="8.77" fill="#a5cc97"/>
<rect x="193.10" y="459.50" width="7.02" height="8.77" fill="#a7ce99"/>
<rect x="200.12" y="459.50" width="7.02" height="8.77" fill="#a6cd98"/>
<rect x="207.14" y="459.50" width="14.04" height="8.77" fill="#a2c994"/>
<rect x="221.18" y="459.50" width="7.02" height="8.77" fill="#a3ca95"/>
<rect x="228.20" y="459.50" width="7.02" height="8.77" fill="#a2c994"/>
<rect x="235.22" y="459.50" width="7.02" height="8.77" fill="#a5cc97"/>
<rect x="73.76" y="468.27" width="7.02" height="8.77" fill="#9fc790"/>
<rect x="80.78" y="468.27" width="7.02" height="8.77" fill="#9dc68e"/>
<rect x="87.80" y="468.27" width="7.02" height="8.77" fill="#98c189"/>
<rect x="94.82" y="468.27" width="7.02" height="8.77" fill="#9cc58d"/>
<rect x="101.84" y="468.27" width="7.02" height="8.77" fill="#99c28b"/>
<rect x="108.86" y="468.27" width="7.02" height="8.77" fill="#9cc48d"/>
<rect x="115.88" y="468.27" width="7.02" height="8.77" fill="#9fc791"/>
<rect x="122.90" y="468.27" width="7.02" height="8.77" fill="#9cc48e"/>
<rect x="129.92" y="468.27" width="7.02" height="8.77" fill="#9dc58f"/>
<rect x="136.94" y="468.27" width="7.02" height="8.77" fill="#a3cb95"/>
<rect x="143.96" y="468.27" width="7.02" height="8.77" fill="#a0c893"/>
<rect x="150.98" y="468.27" width="7.02" height="8.77" fill="#a2c994"/>
<rect x="158.00" y="468.27" width="7.02" height="8.77" fill="#a4cb96"/>
<rect x="165.02" y="468.27" width="7.02" height="8.77" fill="#a5cc97"/>
<rect x="172.04" y="468.27" width="7.02" height="8.77" fill="#a1c893"/>
<rect x="179.06" y="468.27" width="7.02" height="8.77" fill="#a3ca95"/>
<rect x="186.08" y="468.27" width="14.04" height="8.77" fill="#a4cb96"/>
<rect x="200.12" y="468.27" width="7.02" height="8.77" fill="#a2c994"/>
<rect x="207.14" y="468.27" width="7.02" height="8.77" fill="#a5cc97"/>
<rect x="214.16" y="468.27" width="7.02" height="8.77" fill="#a7ce99"/>
<rect x="221.18" y="468.27" width="7.02" height="8.77" fill="#a3ca95"/>
<rect x="228.20" y="468.27" width="7.02" height="8.77" fill="#a4cb96"/>
<rect x="235.22" y="468.27" width="7.02" height="8.77" fill="#a2c994"/>
<rect x="73.76" y="477.04" width="14.04" height="8.77" fill="#a0c58d"/>
<rect x="87.80" y="477.04" width="7.02" height="8.77" fill="#9ac188"/>
<rect x="94.82" y="477.04" width="7.02" height="8.77" fill="#9dc48c"/>
<rect x="101.84" y="477.04" width="7.02" height="8.77" fill="#9dc58d"/>
<rect x="108.86" y="477.04" width="7.02" height="8.77" fill="#98c189"/>
<rect x="115.88" y="477.04" width="7.02" height="8.77" fill="#9dc68f"/>
<rect x="122.90" y="477.04" width="7.02" height="8.77" fill="#9ac38c"/>
<rect x="129.92" y="477.04" width="7.02" height="8.77" fill="#9ec790"/>
<rect x="136.94" y="477.04" width="7.02" height="8.77" fill="#a0c892"/>
<rect x="143.96" y="477.04" width="7.02" height="8.77" fill="#9fc791"/>
<rect x="150.98" y="477.04" width="7.02" height="8.77" fill="#a3ca95"/>
<rect x="158.00" y="477.04" width="7.02" height="8.77" fill="#a4cb96"/>
<rect x="165.02" y="477.04" width="7.02" height="8.77" fill="#a5cc97"/>
<rect x="172.04" y="477.04" width="7.02" height="8.77" fill="#a2c994"/>
<rect x="179.06" y="477.04" width="7.02" height="8.77" fill="#a5cc97"/>
<rect x="186.08" y="477.04" width="7.02" height="8.77" fill="#a7ce99"/>
<rect x="193.10" y="477.04" width="7.02" height="8.77" fill="#a5cc97"/>
<rect x="200.12" y="477.04" width="7.02" height="8.77" fill="#a4cb96"/>
<rect x="207.14" y="477.04" width="7.02" height="8.77" fill="#a2c994"/>
<rect x="214.16" y="477.04" width="7.02" height="8.77" fill="#a4cb96"/>
<rect x="221.18" y="477.04" width="7.02" height="8.77" fill="#a3ca95"/>
<rect x="228.20" y="477.04" width="14.04" height="8.77" fill="#a5cc97"/>
<rect x="73.76" y="485.81" width="7.02" height="8.77" fill="#aac890"/>
<rect x="80.78" y="485.81" width="7.02" height="8.77" fill="#a7c58c"/>
<rect x="87.80" y="485.81" width="7.02" height="8.77" fill="#a5c58c"/>
<rect x="94.82" y="485.81" width="7.02" height="8.77" fill="#9fc38a"/>
<rect x="101.84" y="485.81" width="7.02" height="8.77" fill="#99c087"/>
<rect x="108.86" y="485.81" width="7.02" height="8.77" fill="#9bc48b"/>
<rect x="115.88" y="485.81" width="7.02" height="8.77" fill="#98c289"/>
<rect x="122.90" y="485.81" width="7.02" height="8.77" fill="#94bf87"/>
<rect x="129.92" y="485.81" width="7.02" height="8.77" fill="#9bc58e"/>
<rect x="136.94" y="485.81" width="7.02" height="8.77" fill="#99c38c"/>
<rect x="143.96" y="485.81" width="7.02" height="8.77" fill="#9dc690"/>
<rect x="150.98" y="485.81" width="7.02" height="8.77" fill="#a2ca94"/>
<rect x="158.00" y="485.81" width="7.02" height="8.77" fill="#a3ca95"/>
<rect x="165.02" y="485.81" width="7.02" height="8.77" fill="#a3cb95"/>
<rect x="172.04" y="485.81" width="7.02" height="8.77" fill="#a4cc96"/>
<rect x="179.06" y="485.81" width="7.02" height="8.77" fill="#a4cb96"/>
<rect x="186.08" y="485.81" width="7.02" height="8.77" fill="#a3ca95"/>
<rect x="193.10" y="485.81" width="7.02" height="8.77" fill="#a2c994"/>
<rect x="200.12" y="485.81" width="7.02" height="8.77" fill="#a1c893"/>
<rect x="207.14" y="485.81" width="7.02" height="8.77" fill="#a5cc97"/>
<rect x="214.16" y="485.81" width="7.02" height="8.77" fill="#a6cd98"/>
<rect x="221.18" y="485.81" width="7.02" height="8.77" fill="#a4cb96"/>
<rect x="228.20" y="485.81" width="7.02" height="8.77" fill="#a5cc97"/>
<rect x="235.22" y="485.81" width="7.02" height="8.77" fill="#a3ca95"/>
<rect x="73.76" y="494.58" width="7.02" height="8.77" fill="#b3c98f"/>
<rect x="80.78" y="494.58" width="7.02" height="8.77" fill="#b6c88e"/>
<rect x="87.80" y="494.58" width="7.02" height="8.77" fill="#b4ca8f"/>
<rect x="94.82" y="494.58" width="7.02" height="8.77" fill="#a7c288"/>
<rect x="101.84" y="494.58" width="7.02" height="8.77" fill="#a1c389"/>
<rect x="108.86" y="494.58" width="7.02" height="8.77" fill="#98bf86"/>
<rect x="115.88" y="494.58" width="7.02" height="8.77" fill="#96c188"/>
<rect x="122.90" y="494.58" width="7.02" height="8.77" fill="#93be86"/>
<rect x="129.92" y="494.58" width="7.02" height="8.77" fill="#95c088"/>
<rect x="136.94" y="494.58" width="7.02" height="8.77" fill="#99c38c"/>
<rect x="143.96" y="494.58" width="7.02" height="8.77" fill="#9ec790"/>
<rect x="150.98" y="494.58" width="7.02" height="8.77" fill="#a2ca94"/>
<rect x="158.00" y="494.58" width="7.02" height="8.77" fill="#a1c993"/>
<rect x="165.02" y="494.58" width="7.02" height="8.77" fill="#a5cc97"/>
<rect x="172.04" y="494.58" width="7.02" height="8.77" fill="#a1c893"/>
<rect x="179.06" y="494.58" width="21.06" height="8.77" fill="#a2c994"/>
<rect x="200.12" y="494.58" width="7.02" height="8.77" fill="#a6cd98"/>
<rect x="207.14" y="494.58" width="7.02" height="8.77" fill="#a5cc97"/>
<rect x="214.16" y="494.58" width="14.04" height="8.77" fill="#a2c994"/>
<rect x="228.20" y="494.58" width="7.02" height="8.77" fill="#a3ca95"/>
<rect x="235.22" y="494.58" width="7.02" height="8.77" fill="#a5cc97"/>
<rect x="73.76" y="503.35" width="7.02" height="8.77" fill="#bccd93"/>
<rect x="80.78" y="503.35" width="7.02" height="8.77" fill="#c1cd91"/>
<rect x="87.80" y="503.35" width="7.02" height="8.77" fill="#bfcb8f"/>
<rect x="94.82" y="503.35" width="7.02" height="8.77" fill="#b4c68b"/>
<rect x="101.84" y="503.35" width="7.02" height="8.77" fill="#aac58b"/>
<rect x="108.86" y="503.35" width="7.02" height="8.77" fill="#9dc188"/>
<rect x="115.88" y="503.35" width="7.02" height="8.77" fill="#99c188"/>
<rect x="122.90" y="503.35" width="7.02" height="8.77" fill="#97c188"/>
<rect x="129.92" y="503.35" width="7.02" height="8.77" fill="#96c089"/>
<rect x="136.94" y="503.35" width="7.02" height="8.77" fill="#9ac38c"/>
<rect x="143.96" y="503.35" width="7.02" height="8.77" fill="#a0c892"/>
<rect x="150.98" y="503.35" width="7.02" height="8.77" fill="#9ec690"/>
<rect x="158.00" y="503.35" width="7.02" height="8.77" fill="#a4cb96"/>
<rect x="165.02" y="503.35" width="7.02" height="8.77" fill="#a5cd97"/>
<rect x="172.04" y="503.35" width="7.02" height="8.77" fill="#a6cd98"/>
<rect x="179.06" y="503.35" width="7.02" height="8.77" fill="#a3ca95"/>
<rect x="186.08" y="503.35" width="14.04" height="8.77" fill="#a4cb96"/>
<rect x="200.12" y="503.35" width="7.02" height="8.77" fill="#a5cc97"/>
<rect x="207.14" y="503.35" width="7.02" height="8.77" fill="#a7ce99"/>
<rect x="214.16" y="503.35" width="7.02" height="8.77" fill="#a5cc97"/>
<rect x="221.18" y="503.35" width="7.02" height="8.77" fill="#a3ca95"/>
<rect x="228.20" y="503.35" width="7.02" height="8.77" fill="#a6cd98"/>
<rect x="235.22" y="503.35" width="7.02" height="8.77" fill="#a4cb96"/>
<rect x="73.76" y="512.12" width="7.02" height="8.77" fill="#b9cc93"/>
<rect x="80.78" y="512.12" width="7.02" height="8.77" fill="#bfcd92"/>
<rect x="87.80" y="512.12" width="7.02" height="8.77" fill="#bcc88d"/>
<rect x="94.82" y="512.12" width="7.02" height="8.77" fill="#bccc91"/>
<rect x="101.84" y="512.12" width="7.02" height="8.77" fill="#b4c98f"/>
<rect x="108.86" y="512.12" width="7.02" height="8.77" fill="#aac68c"/>
<rect x="115.88" y="512.12" width="7.02" height="8.77" fill="#a3c58c"/>
<rect x="122.90" y="512.12" width="7.02" height="8.77" fill="#9fc48c"/>
<rect x="129.92" y="512.12" width="7.02" height="8.77" fill="#9cc38c"/>
<rect x="136.94" y="512.12" width="7.02" height="8.77" fill="#9fc790"/>
<rect x="143.96" y="512.12" width="7.02" height="8.77" fill="#9ec58f"/>
<rect x="150.98" y="512.12" width="7.02" height="8.77" fill="#a2c993"/>
<rect x="158.00" y="512.12" width="7.02" height="8.77" fill="#a4cb95"/>
<rect x="165.02" y="512.12" width="7.02" height="8.77" fill="#a3ca95"/>
<rect x="172.04" y="512.12" width="7.02" height="8.77" fill="#a4cb96"/>
<rect x="179.06" y="512.12" width="7.02" height="8.77" fill="#a7ce99"/>
<rect x="186.08" y="512.12" width="7.02" height="8.77" fill="#a6cd98"/>
<rect x="193.10" y="512.12" width="7.02" height="8.77" fill="#a2c994"/>
<rect x="200.12" y="512.12" width="7.02" height="8.77" fill="#a6cd98"/>
<rect x="207.14" y="512.12" width="7.02" height="8.77" fill="#a5cc97"/>
<rect x="214.16" y="512.12" width="7.02" height="8.77" fill="#a1c893"/>
<rect x="221.18" y="512.12" width="7.02" height="8.77" fill="#a3ca95"/>
<rect x="228.20" y="512.12" width="7.02" height="8.77" fill="#a2c994"/>
<rect x="235.22" y="512.12" width="7.02" height="8.77" fill="#a1c893"/>
<rect x="73.76" y="520.89" width="7.02" height="8.77" fill="#b2cb93"/>
<rect x="80.78" y="520.89" width="7.02" height="8.77" fill="#b9ce95"/>
<rect x="87.80" y="520.89" width="7.02" height="8.77" fill="#b8ca90"/>
<rect x="94.82" y="520.89" width="7.02" height="8.77" fill="#bdcd92"/>
<rect x="101.84" y="520.89" width="7.02" height="8.77" fill="#bccb90"/>
<rect x="108.86" y="520.89" width="7.02" height="8.77" fill="#b5c78c"/>
<rect x="115.88" y="520.89" width="7.02" height="8.77" fill="#b3ca91"/>
<rect x="122.90" y="520.89" width="7.02" height="8.77" fill="#acc890"/>
<rect x="129.92" y="520.89" width="7.02" height="8.77" fill="#aacb93"/>
<rect x="136.94" y="520.89" width="7.02" height="8.77" fill="#a7ca93"/>
<rect x="143.96" y="520.89" width="7.02" height="8.77" fill="#a8cb94"/>
<rect x="150.98" y="520.89" width="7.02" height="8.77" fill="#a5c993"/>
<rect x="158.00" y="520.89" width="7.02" height="8.77" fill="#a6cc97"/>
<rect x="165.02" y="520.89" width="14.04" height="8.77" fill="#a6cd98"/>
<rect x="179.06" y="520.89" width="7.02" height="8.77" fill="#a4cb96"/>
<rect x="186.08" y="520.89" width="7.02" height="8.77" fill="#a6cd98"/>
<rect x="193.10" y="520.89" width="7.02" height="8.77" fill="#a4cb96"/>
<rect x="200.12" y="520.89" width="7.02" height="8.77" fill="#a2c994"/>
<rect x="207.14" y="520.89" width="14.04" height="8.77" fill="#a1c893"/>
<rect x="221.18" y="520.89" width="14.04" height="8.77" fill="#a2c994"/>
<rect x="235.22" y="520.89" width="7.02" height="8.77" fill="#a4cb96"/>
<rect x="73.76" y="529.66" width="7.02" height="8.77" fill="#abcc95"/>
<rect x="80.78" y="529.66" width="7.02" height="8.77" fill="#aecb93"/>
<rect x="87.80" y="529.66" width="7.02" height="8.77" fill="#b1ca92"/>
<rect x="94.82" y="529.66" width="7.02" height="8.77" fill="#b8cb92"/>
<rect x="101.84" y="529.66" width="7.02" height="8.77" fill="#bac98f"/>
<rect x="108.86" y="529.66" width="7.02" height="8.77" fill="#bbca8f"/>
<rect x="115.88" y="529.66" width="7.02" height="8.77" fill="#bbcc91"/>
<rect x="122.90" y="529.66" width="7.02" height="8.77" fill="#b6c98f"/>
<rect x="129.92" y="529.66" width="7.02" height="8.77" fill="#b0c88f"/>
<rect x="136.94" y="529.66" width="7.02" height="8.77" fill="#b2cd94"/>
<rect x="143.96" y="529.66" width="7.02" height="8.77" fill="#b2cc94"/>
<rect x="150.98" y="529.66" width="7.02" height="8.77" fill="#adca93"/>
<rect x="158.00" y="529.66" width="7.02" height="8.77" fill="#a7ca94"/>
<rect x="165.02" y="529.66" width="14.04" height="8.77" fill="#a5cb96"/>
<rect x="179.06" y="529.66" width="7.02" height="8.77" fill="#a2c994"/>
<rect x="186.08" y="529.66" width="7.02" height="8.77" fill="#a1c893"/>
<rect x="193.10" y="529.66" width="7.02" height="8.77" fill="#a2c994"/>
<rect x="200.12" y="529.66" width="7.02" height="8.77" fill="#a6cd98"/>
<rect x="207.14" y="529.66" width="7.02" height="8.77" fill="#a2c994"/>
<rect x="214.16" y="529.66" width="7.02" height="8.77" fill="#a4cb96"/>
<rect x="221.18" y="529.66" width="21.06" height="8.77" fill="#a2c994"/>
<rect x="73.76" y="538.43" width="7.02" height="8.77" fill="#a4c993"/>
<rect x="80.78" y="538.43" width="7.02" height="8.77" fill="#a4c891"/>
<rect x="87.80" y="538.43" width="7.02" height="8.77" fill="#a6c790"/>
<rect x="94.82" y="538.43" width="7.02" height="8.77" fill="#abc78f"/>
<rect x="101.84" y="538.43" width="7.02" height="8.77" fill="#afc88f"/>
<rect x="108.86" y="538.43" width="7.02" height="8.77" fill="#b3ca90"/>
<rect x="115.88" y="538.43" width="7.02" height="8.77" fill="#b3c78e"/>
<rect x="122.90" y="538.43" width="7.02" height="8.77" fill="#b3c88e"/>
<rect x="129.92" y="538.43" width="14.04" height="8.77" fill="#b2ca92"/>
<rect x="143.96" y="538.43" width="7.02" height="8.77" fill="#b6cc94"/>
<rect x="150.98" y="538.43" width="7.02" height="8.77" fill="#aec991"/>
<rect x="158.00" y="538.43" width="7.02" height="8.77" fill="#a9ca94"/>
<rect x="165.02" y="538.43" width="7.02" height="8.77" fill="#a4ca95"/>
<rect x="172.04" y="538.43" width="7.02" height="8.77" fill="#a1c893"/>
<rect x="179.06" y="538.43" width="7.02" height="8.77" fill="#a7ce99"/>
<rect x="186.08" y="538.43" width="14.04" height="8.77" fill="#a2c994"/>
<rect x="200.12" y="538.43" width="7.02" height="8.77" fill="#a4cb96"/>
<rect x="207.14" y="538.43" width="7.02" height="8.77" fill="#a2c994"/>
<rect x="214.16" y="538.43" width="7.02" height="8.77" fill="#a5cc97"/>
<rect x="221.18" y="538.43" width="7.02" height="8.77" fill="#a3ca95"/>
<rect x="228.20" y="538.43" width="7.02" height="8.77" fill="#a2c994"/>
<rect x="235.22" y="538.43" width="7.02" height="8.77" fill="#a1c893"/>
<rect x="73.76" y="547.20" width="7.02" height="8.77" fill="#a3ca95"/>
<rect x="80.78" y="547.20" width="7.02" height="8.77" fill="#a0c791"/>
<rect x="87.80" y="547.20" width="7.02" height="8.77" fill="#a4ca94"/>
<rect x="94.82" y="547.20" width="7.02" height="8.77" fill="#a3c891"/>
<rect x="101.84" y="547.20" width="7.02" height="8.77" fill="#a8cb94"/>
<rect x="108.86" y="547.20" width="7.02" height="8.77" fill="#a6c790"/>
<rect x="115.88" y="547.20" width="7.02" height="8.77" fill="#a8c790"/>
<rect x="122.90" y="547.20" width="7.02" height="8.77" fill="#a9c891"/>
<rect x="129.92" y="547.20" width="7.02" height="8.77" fill="#accc95"/>
<rect x="136.94" y="547.20" width="7.02" height="8.77" fill="#abcb94"/>
<rect x="143.96" y="547.20" width="7.02" height="8.77" fill="#aaca93"/>
<rect x="150.98" y="547.20" width="7.02" height="8.77" fill="#a7c892"/>
<rect x="158.00" y="547.20" width="7.02" height="8.77" fill="#a7cc96"/>
<rect x="165.02" y="547.20" width="7.02" height="8.77" fill="#a7ce99"/>
<rect x="172.04" y="547.20" width="7.02" height="8.77" fill="#a5cc96"/>
<rect x="179.06" y="547.20" width="14.04" height="8.77" fill="#a1c893"/>
<rect x="193.10" y="547.20" width="14.04" height="8.77" fill="#a2c994"/>
<rect x="207.14" y="547.20" width="14.04" height="8.77" fill="#a1c893"/>
<rect x="221.18" y="547.20" width="7.02" height="8.77" fill="#a5cc97"/>
<rect x="228.20" y="547.20" width="7.02" height="8.77" fill="#a6cd98"/>
<rect x="235.22" y="547.20" width="7.02" height="8.77" fill="#a2c994"/>
<rect x="73.76" y="555.97" width="7.02" height="8.77" fill="#a3cb95"/>
<rect x="80.78" y="555.97" width="7.02" height="8.77" fill="#9fc791"/>
<rect x="87.80" y="555.97" width="7.02" height="8.77" fill="#a0c992"/>
<rect x="94.82" y="555.97" width="7.02" height="8.77" fill="#a1c993"/>
<rect x="101.84" y="555.97" width="7.02" height="8.77" fill="#a2c993"/>
<rect x="108.86" y="555.97" width="7.02" height="8.77" fill="#9dc48e"/>
<rect x="115.88" y="555.97" width="7.02" height="8.77" fill="#a0c790"/>
<rect x="122.90" y="555.97" width="7.02" height="8.77" fill="#a3c993"/>
<rect x="129.92" y="555.97" width="7.02" height="8.77" fill="#a6cc96"/>
<rect x="136.94" y="555.97" width="7.02" height="8.77" fill="#a1c792"/>
<rect x="143.96" y="555.97" width="7.02" height="8.77" fill="#a3c994"/>
<rect x="150.98" y="555.97" width="7.02" height="8.77" fill="#a7cd97"/>
<rect x="158.00" y="555.97" width="7.02" height="8.77" fill="#a2c893"/>
<rect x="165.02" y="555.97" width="14.04" height="8.77" fill="#a3ca95"/>
<rect x="179.06" y="555.97" width="7.02" height="8.77" fill="#a5cc97"/>
<rect x="186.08" y="555.97" width="7.02" height="8.77" fill="#a7ce99"/>
<rect x="193.10" y="555.97" width="7.02" height="8.77" fill="#a2c994"/>
<rect x="200.12" y="555.97" width="14.04" height="8.77" fill="#a5cc97"/>
<rect x="214.16" y="555.97" width="7.02" height="8.77" fill="#a6cd98"/>
<rect x="221.18" y="555.97" width="7.02" height="8.77" fill="#a4cb96"/>
<rect x="228.20" y="555.97" width="7.02" height="8.77" fill="#a7ce99"/>
<rect x="235.22" y="555.97" width="7.02" height="8.77" fill="#a3ca95"/>
<rect x="73.76" y="564.74" width="7.02" height="8.77" fill="#9ec791"/>
<rect x="80.78" y="564.74" width="7.02" height="8.77" fill="#9cc58f"/>
<rect x="87.80" y="564.74" width="7.02" height="8.77" fill="#9fc891"/>
<rect x="94.82" y="564.74" width="7.02" height="8.77" fill="#9cc58f"/>
<rect x="101.84" y="564.74" width="14.04" height="8.77" fill="#9bc48e"/>
<rect x="115.88" y="564.74" width="7.02" height="8.77" fill="#a0c892"/>
<rect x="122.90" y="564.74" width="7.02" height="8.77" fill="#a0c993"/>
<rect x="129.92" y="564.74" width="7.02" height="8.77" fill="#a2ca94"/>
<rect x="136.94" y="564.74" width="7.02" height="8.77" fill="#a1c993"/>
<rect x="143.96" y="564.74" width="7.02" height="8.77" fill="#a3ca95"/>
<rect x="150.98" y="564.74" width="7.02" height="8.77" fill="#a1c893"/>
<rect x="158.00" y="564.74" width="7.02" height="8.77" fill="#a5cc97"/>
<rect x="165.02" y="564.74" width="7.02" height="8.77" fill="#a1c893"/>
<rect x="172.04" y="564.74" width="7.02" height="8.77" fill="#a4cb96"/>
<rect x="179.06" y="564.74" width="7.02" height="8.77" fill="#a6cd98"/>
<rect x="186.08" y="564.74" width="7.02" height="8.77" fill="#a5cc97"/>
<rect x="193.10" y="564.74" width="14.04" height="8.77" fill="#a2c994"/>
<rect x="207.14" y="564.74" width="7.02" height="8.77" fill="#a6cd98"/>
<rect x="214.16" y="564.74" width="7.02" height="8.77" fill="#a5cc97"/>
<rect x="221.18" y="564.74" width="14.04" height="8.77" fill="#a6cd98"/>
<rect x="235.22" y="564.74" width="7.02" height="8.77" fill="#a4cb96"/>
<rect x="73.76" y="573.51" width="7.02" height="8.77" fill="#a1c993"/>
<rect x="80.78" y="573.51" width="7.02" height="8.77" fill="#9fc891"/>
<rect x="87.80" y="573.51" width="14.04" height="8.77" fill="#9bc48e"/>
<rect x="101.84" y="573.51" width="7.02" height="8.77" fill="#99c38c"/>
<rect x="108.86" y="573.51" width="7.02" height="8.77" fill="#9cc58f"/>
<rect x="115.88" y="573.51" width="7.02" height="8.77" fill="#a1c993"/>
<rect x="122.90" y="573.51" width="7.02" height="8.77" fill="#9dc58f"/>
<rect x="129.92" y="573.51" width="7.02" height="8.77" fill="#a1c993"/>
<rect x="136.94" y="573.51" width="7.02" height="8.77" fill="#9fc792"/>
<rect x="143.96" y="573.51" width="7.02" height="8.77" fill="#a0c892"/>
<rect x="150.98" y="573.51" width="7.02" height="8.77" fill="#a4cb96"/>
<rect x="158.00" y="573.51" width="7.02" height="8.77" fill="#a2c994"/>
<rect x="165.02" y="573.51" width="7.02" height="8.77" fill="#a1c893"/>
<rect x="172.04" y="573.51" width="7.02" height="8.77" fill="#a2c994"/>
<rect x="179.06" y="573.51" width="7.02" height="8.77" fill="#a5cc97"/>
<rect x="186.08" y="573.51" width="7.02" height="8.77" fill="#a4cb96"/>
<rect x="193.10" y="573.51" width="7.02" height="8.77" fill="#a1c893"/>
<rect x="200.12" y="573.51" width="7.02" height="8.77" fill="#a2c994"/>
<rect x="207.14" y="573.51" width="7.02" height="8.77" fill="#a7ce99"/>
<rect x="214.16" y="573.51" width="7.02" height="8.77" fill="#a2c994"/>
<rect x="221.18" y="573.51" width="14.04" height="8.77" fill="#a4cb96"/>
<rect x="235.22" y="573.51" width="7.02" height="8.77" fill="#a6cd98"/>
<rect x="73.76" y="582.28" width="14.04" height="8.77" fill="#9fc892"/>
<rect x="87.80" y="582.28" width="7.02" height="8.77" fill="#9dc68f"/>
<rect x="94.82" y="582.28" width="21.06" height="8.77" fill="#9ac38d"/>
<rect x="115.88" y="582.28" width="7.02" height="8.77" fill="#a0c992"/>
<rect x="122.90" y="582.28" width="7.02" height="8.77" fill="#9dc58f"/>
<rect x="129.92" y="582.28" width="7.02" height="8.77" fill="#9ec690"/>
<rect x="136.94" y="582.28" width="7.02" height="8.77" fill="#a5cc97"/>
<rect x="143.96" y="582.28" width="7.02" height="8.77" fill="#a1c893"/>
<rect x="150.98" y="582.28" width="7.02" height="8.77" fill="#a6cd98"/>
<rect x="158.00" y="582.28" width="7.02" height="8.77" fill="#a1c893"/>
<rect x="165.02" y="582.28" width="7.02" height="8.77" fill="#a4cb96"/>
<rect x="172.04" y="582.28" width="7.02" height="8.77" fill="#a2c994"/>
<rect x="179.06" y="582.28" width="7.02" height="8.77" fill="#a6cd98"/>
<rect x="186.08" y="582.28" width="14.04" height="8.77" fill="#a4cb96"/>
<rect x="200.12" y="582.28" width="7.02" height="8.77" fill="#a4cc96"/>
<rect x="207.14" y="582.28" width="7.02" height="8.77" fill="#a5cc97"/>
<rect x="214.16" y="582.28" width="7.02" height="8.77" fill="#a2ca94"/>
<rect x="221.18" y="582.28" width="14.04" height="8.77" fill="#a4cb96"/>
<rect x="235.22" y="582.28" width="7.02" height="8.77" fill="#a2c994"/>
<rect x="73.76" y="591.05" width="7.02" height="8.77" fill="#a1ca94"/>
<rect x="80.78" y="591.05" width="7.02" height="8.77" fill="#9fc891"/>
<rect x="87.80" y="591.05" width="7.02" height="8.77" fill="#9fc892"/>
<rect x="94.82" y="591.05" width="7.02" height="8.77" fill="#9bc48e"/>
<rect x="101.84" y="591.05" width="7.02" height="8.77" fill="#9dc690"/>
<rect x="108.86" y="591.05" width="7.02" height="8.77" fill="#9ec690"/>
<rect x="115.88" y="591.05" width="7.02" height="8.77" fill="#a0c993"/>
<rect x="122.90" y="591.05" width="7.02" height="8.77" fill="#9dc690"/>
<rect x="129.92" y="591.05" width="7.02" height="8.77" fill="#a0c892"/>
<rect x="136.94" y="591.05" width="7.02" height="8.77" fill="#a2ca94"/>
<rect x="143.96" y="591.05" width="7.02" height="8.77" fill="#a0c892"/>
<rect x="150.98" y="591.05" width="7.02" height="8.77" fill="#a4cb96"/>
<rect x="158.00" y="591.05" width="7.02" height="8.77" fill="#a5cc97"/>
<rect x="165.02" y="591.05" width="7.02" height="8.77" fill="#a3ca95"/>
<rect x="172.04" y="591.05" width="7.02" height="8.77" fill="#a5cc97"/>
<rect x="179.06" y="591.05" width="7.02" height="8.77" fill="#a4cb96"/>
<rect x="186.08" y="591.05" width="7.02" height="8.77" fill="#a1c893"/>
<rect x="193.10" y="591.05" width="7.02" height="8.77" fill="#a0c892"/>
<rect x="200.12" y="591.05" width="7.02" height="8.77" fill="#a1ca94"/>
<rect x="207.14" y="591.05" width="7.02" height="8.77" fill="#9dc690"/>
<rect x="214.16" y="591.05" width="14.04" height="8.77" fill="#a0c892"/>
<rect x="228.20" y="591.05" width="14.04" height="8.77" fill="#a2c994"/>
<rect x="73.76" y="599.82" width="7.02" height="8.77" fill="#a3cb95"/>
<rect x="80.78" y="599.82" width="7.02" height="8.77" fill="#a1c993"/>
<rect x="87.80" y="599.82" width="7.02" height="8.77" fill="#a1ca94"/>
<rect x="94.82" y="599.82" width="7.02" height="8.77" fill="#a2ca94"/>
<rect x="101.84" y="599.82" width="7.02" height="8.77" fill="#9fc892"/>
<rect x="108.86" y="599.82" width="7.02" height="8.77" fill="#a2ca94"/>
<rect x="115.88" y="599.82" width="14.04" height="8.77" fill="#a0c893"/>
<rect x="129.92" y="599.82" width="14.04" height="8.77" fill="#a5cc97"/>
<rect x="143.96" y="599.82" width="7.02" height="8.77" fill="#a6cd98"/>
<rect x="150.98" y="599.82" width="7.02" height="8.77" fill="#a3cb95"/>
<rect x="158.00" y="599.82" width="7.02" height="8.77" fill="#a5cc97"/>
<rect x="165.02" y="599.82" width="7.02" height="8.77" fill="#a3ca95"/>
<rect x="172.04" y="599.82" width="7.02" height="8.77" fill="#a7ce99"/>
<rect x="179.06" y="599.82" width="7.02" height="8.77" fill="#a6cd98"/>
<rect x="186.08" y="599.82" width="7.02" height="8.77" fill="#a0c892"/>
<rect x="193.10" y="599.82" width="7.02" height="8.77" fill="#9fc992"/>
<rect x="200.12" y="599.82" width="7.02" height="8.77" fill="#96c189"/>
<rect x="207.14" y="599.82" width="7.02" height="8.77" fill="#96c089"/>
<rect x="214.16" y="599.82" width="7.02" height="8.77" fill="#9ec791"/>
<rect x="221.18" y="599.82" width="7.02" height="8.77" fill="#a0c892"/>
<rect x="228.20" y="599.82" width="7.02" height="8.77" fill="#a3cb96"/>
<rect x="235.22" y="599.82" width="7.02" height="8.77" fill="#a5cc97"/>
<rect x="73.76" y="608.59" width="7.02" height="8.77" fill="#9fc791"/>
<rect x="80.78" y="608.59" width="7.02" height="8.77" fill="#a2ca95"/>
<rect x="87.80" y="608.59" width="7.02" height="8.77" fill="#9fc791"/>
<rect x="94.82" y="608.59" width="7.02" height="8.77" fill="#a0c892"/>
<rect x="101.84" y="608.59" width="7.02" height="8.77" fill="#9fc792"/>
<rect x="108.86" y="608.59" width="7.02" height="8.77" fill="#a2ca94"/>
<rect x="115.88" y="608.59" width="7.02" height="8.77" fill="#a3ca95"/>
<rect x="122.90" y="608.59" width="7.02" height="8.77" fill="#a1c893"/>
<rect x="129.92" y="608.59" width="7.02" height="8.77" fill="#a0c892"/>
<rect x="136.94" y="608.59" width="7.02" height="8.77" fill="#a2c994"/>
<rect x="143.96" y="608.59" width="7.02" height="8.77" fill="#a3ca95"/>
<rect x="150.98" y="608.59" width="7.02" height="8.77" fill="#a1c893"/>
<rect x="158.00" y="608.59" width="7.02" height="8.77" fill="#a2c994"/>
<rect x="165.02" y="608.59" width="7.02" height="8.77" fill="#a5cd97"/>
<rect x="172.04" y="608.59" width="7.02" height="8.77" fill="#a5cc97"/>
<rect x="179.06" y="608.59" width="7.02" height="8.77" fill="#a6cd98"/>
<rect x="186.08" y="608.59" width="7.02" height="8.77" fill="#a4cc97"/>
<rect x="193.10" y="608.59" width="7.02" height="8.77" fill="#9fc892"/>
<rect x="200.12" y="608.59" width="7.02" height="8.77" fill="#98c28b"/>
<rect x="207.14" y="608.59" width="7.02" height="8.77" fill="#96c189"/>
<rect x="214.16" y="608.59" width="7.02" height="8.77" fill="#98c28b"/>
<rect x="221.18" y="608.59" width="7.02" height="8.77" fill="#9dc690"/>
<rect x="228.20" y="608.59" width="7.02" height="8.77" fill="#a3ca95"/>
<rect x="235.22" y="608.59" width="7.02" height="8.77" fill="#a4cb96"/>
<rect x="73.76" y="617.36" width="7.02" height="8.77" fill="#a2c994"/>
<rect x="80.78" y="617.36" width="7.02" height="8.77" fill="#a4cc96"/>
<rect x="87.80" y="617.36" width="7.02" height="8.77" fill="#a0c892"/>
<rect x="94.82" y="617.36" width="7.02" height="8.77" fill="#a1c993"/>
<rect x="101.84" y="617.36" width="7.02" height="8.77" fill="#a3cb96"/>
<rect x="108.86" y="617.36" width="7.02" height="8.77" fill="#a3cb95"/>
<rect x="115.88" y="617.36" width="7.02" height="8.77" fill="#a0c893"/>
<rect x="122.90" y="617.36" width="7.02" height="8.77" fill="#a1c893"/>
<rect x="129.92" y="617.36" width="7.02" height="8.77" fill="#a5cc97"/>
<rect x="136.94" y="617.36" width="7.02" height="8.77" fill="#a0c792"/>
<rect x="143.96" y="617.36" width="7.02" height="8.77" fill="#a1c893"/>
<rect x="150.98" y="617.36" width="14.04" height="8.77" fill="#a4cb96"/>
<rect x="165.02" y="617.36" width="7.02" height="8.77" fill="#a2c994"/>
<rect x="172.04" y="617.36" width="7.02" height="8.77" fill="#a1c893"/>
<rect x="179.06" y="617.36" width="7.02" height="8.77" fill="#a2c994"/>
<rect x="186.08" y="617.36" width="7.02" height="8.77" fill="#a4cc97"/>
<rect x="193.10" y="617.36" width="7.02" height="8.77" fill="#a1c993"/>
<rect x="200.12" y="617.36" width="7.02" height="8.77" fill="#a2ca94"/>
<rect x="207.14" y="617.36" width="7.02" height="8.77" fill="#9ec791"/>
<rect x="214.16" y="617.36" width="7.02" height="8.77" fill="#9bc58e"/>
<rect x="221.18" y="617.36" width="7.02" height="8.77" fill="#98c28b"/>
<rect x="228.20" y="617.36" width="7.02" height="8.77" fill="#a0c892"/>
<rect x="235.22" y="617.36" width="7.02" height="8.77" fill="#a1c893"/>
<rect x="73.76" y="626.13" width="7.02" height="8.77" fill="#a3ca94"/>
<rect x="80.78" y="626.13" width="7.02" height="8.77" fill="#a3c993"/>
<rect x="87.80" y="626.13" width="7.02" height="8.77" fill="#a0c791"/>
<rect x="94.82" y="626.13" width="7.02" height="8.77" fill="#a2c993"/>
<rect x="101.84" y="626.13" width="7.02" height="8.77" fill="#9ec690"/>
<rect x="108.86" y="626.13" width="14.04" height="8.77" fill="#a0c792"/>
<rect x="122.90" y="626.13" width="7.02" height="8.77" fill="#a4cb96"/>
<rect x="129.92" y="626.13" width="14.04" height="8.77" fill="#a2c994"/>
<rect x="143.96" y="626.13" width="7.02" height="8.77" fill="#a1c893"/>
<rect x="150.98" y="626.13" width="7.02" height="8.77" fill="#a3ca95"/>
<rect x="158.00" y="626.13" width="14.04" height="8.77" fill="#a5cc97"/>
<rect x="172.04" y="626.13" width="14.04" height="8.77" fill="#a6cd98"/>
<rect x="186.08" y="626.13" width="7.02" height="8.77" fill="#a2c994"/>
<rect x="193.10" y="626.13" width="7.02" height="8.77" fill="#a1c893"/>
<rect x="200.12" y="626.13" width="7.02" height="8.77" fill="#a5cc97"/>
<rect x="207.14" y="626.13" width="7.02" height="8.77" fill="#a4cc96"/>
<rect x="214.16" y="626.13" width="7.02" height="8.77" fill="#a1c993"/>
<rect x="221.18" y="626.13" width="14.04" height="8.77" fill="#a4cb96"/>
<rect x="235.22" y="626.13" width="7.02" height="8.77" fill="#a3ca95"/>
<rect x="73.76" y="634.90" width="7.02" height="8.77" fill="#a6c892"/>
<rect x="80.78" y="634.90" width="7.02" height="8.77" fill="#a6c790"/>
<rect x="87.80" y="634.90" width="7.02" height="8.77" fill="#a8ca93"/>
<rect x="94.82" y="634.90" width="7.02" height="8.77" fill="#a5ca94"/>
<rect x="101.84" y="634.90" width="7.02" height="8.77" fill="#a2ca94"/>
<rect x="108.86" y="634.90" width="7.02" height="8.77" fill="#9fc791"/>
<rect x="115.88" y="634.90" width="7.02" height="8.77" fill="#a0c993"/>
<rect x="122.90" y="634.90" width="7.02" height="8.77" fill="#a3cb95"/>
<rect x="129.92" y="634.90" width="7.02" height="8.77" fill="#a4cb96"/>
<rect x="136.94" y="634.90" width="7.02" height="8.77" fill="#a3cb95"/>
<rect x="143.96" y="634.90" width="7.02" height="8.77" fill="#a3ca95"/>
<rect x="150.98" y="634.90" width="7.02" height="8.77" fill="#a4cb96"/>
<rect x="158.00" y="634.90" width="14.04" height="8.77" fill="#a2c994"/>
<rect x="172.04" y="634.90" width="7.02" height="8.77" fill="#a5cc97"/>
<rect x="179.06" y="634.90" width="7.02" height="8.77" fill="#a7ce99"/>
<rect x="186.08" y="634.90" width="7.02" height="8.77" fill="#a4cb96"/>
<rect x="193.10" y="634.90" width="14.04" height="8.77" fill="#a3ca95"/>
<rect x="207.14" y="634.90" width="7.02" height="8.77" fill="#a4cb96"/>
<rect x="214.16" y="634.90" width="7.02" height="8.77" fill="#a6cd98"/>
<rect x="221.18" y="634.90" width="7.02" height="8.77" fill="#a4cb96"/>
<rect x="228.20" y="634.90" width="7.02" height="8.77" fill="#a7ce99"/>
<rect x="235.22" y="634.90" width="7.02" height="8.77" fill="#a2c994"/>
<rect x="73.76" y="643.67" width="7.02" height="8.77" fill="#aec991"/>
<rect x="80.78" y="643.67" width="7.02" height="8.77" fill="#b4ca91"/>
<rect x="87.80" y="643.67" width="7.02" height="8.77" fill="#afc88f"/>
<rect x="94.82" y="643.67" width="7.02" height="8.77" fill="#a8c991"/>
<rect x="101.84" y="643.67" width="7.02" height="8.77" fill="#a1c891"/>
<rect x="108.86" y="643.67" width="7.02" height="8.77" fill="#9fc891"/>
<rect x="115.88" y="643.67" width="7.02" height="8.77" fill="#9ec790"/>
<rect x="122.90" y="643.67" width="7.02" height="8.77" fill="#9cc58e"/>
<rect x="129.92" y="643.67" width="7.02" height="8.77" fill="#a1c993"/>
<rect x="136.94" y="643.67" width="7.02" height="8.77" fill="#a2ca95"/>
<rect x="143.96" y="643.67" width="7.02" height="8.77" fill="#a3ca95"/>
<rect x="150.98" y="643.67" width="7.02" height="8.77" fill="#a2c994"/>
<rect x="158.00" y="643.67" width="7.02" height="8.77" fill="#a5cc97"/>
<rect x="165.02" y="643.67" width="7.02" height="8.77" fill="#a6cd98"/>
<rect x="172.04" y="643.67" width="7.02" height="8.77" fill="#a2c994"/>
<rect x="179.06" y="643.67" width="7.02" height="8.77" fill="#a5cc97"/>
<rect x="186.08" y="643.67" width="7.02" height="8.77" fill="#a3ca95"/>
<rect x="193.10" y="643.67" width="7.02" height="8.77" fill="#a4cb96"/>
<rect x="200.12" y="643.67" width="7.02" height="8.77" fill="#a6cd98"/>
<rect x="207.14" y="643.67" width="7.02" height="8.77" fill="#a7ce99"/>
<rect x="214.16" y="643.67" width="7.02" height="8.77" fill="#a5cc97"/>
<rect x="221.18" y="643.67" width="7.02" height="8.77" fill="#a2c994"/>
<rect x="228.20" y="643.67" width="7.02" height="8.77" fill="#a7ce99"/>
<rect x="235.22" y="643.67" width="7.02" height="8.77" fill="#a2c994"/>
<rect x="73.76" y="652.44" width="7.02" height="8.77" fill="#b1ca91"/>
<rect x="80.78" y="652.44" width="7.02" height="8.77" fill="#b9cc91"/>
<rect x="87.80" y="652.44" width="7.02" height="8.77" fill="#b0c78d"/>
<rect x="94.82" y="652.44" width="7.02" height="8.77" fill="#a5c58c"/>
<rect x="101.84" y="652.44" width="7.02" height="8.77" fill="#a1c790"/>
<rect x="108.86" y="652.44" width="7.02" height="8.77" fill="#9ec790"/>
<rect x="115.88" y="652.44" width="7.02" height="8.77" fill="#9bc48d"/>
<rect x="122.90" y="652.44" width="7.02" height="8.77" fill="#9dc690"/>
<rect x="129.92" y="652.44" width="7.02" height="8.77" fill="#9fc791"/>
<rect x="136.94" y="652.44" width="7.02" height="8.77" fill="#a0c792"/>
<rect x="143.96" y="652.44" width="7.02" height="8.77" fill="#a1c993"/>
<rect x="150.98" y="652.44" width="7.02" height="8.77" fill="#a6ce98"/>
<rect x="158.00" y="652.44" width="7.02" height="8.77" fill="#a1c893"/>
<rect x="165.02" y="652.44" width="14.04" height="8.77" fill="#a2c994"/>
<rect x="179.06" y="652.44" width="7.02" height="8.77" fill="#a1c893"/>
<rect x="186.08" y="652.44" width="7.02" height="8.77" fill="#a4cb96"/>
<rect x="193.10" y="652.44" width="7.02" height="8.77" fill="#a5cc97"/>
<rect x="200.12" y="652.44" width="7.02" height="8.77" fill="#a6cd98"/>
<rect x="207.14" y="652.44" width="7.02" height="8.77" fill="#a5cc97"/>
<rect x="214.16" y="652.44" width="7.02" height="8.77" fill="#a6cd98"/>
<rect x="221.18" y="652.44" width="7.02" height="8.77" fill="#a1c893"/>
<rect x="228.20" y="652.44" width="7.02" height="8.77" fill="#a3ca95"/>
<rect x="235.22" y="652.44" width="7.02" height="8.77" fill="#a7ce99"/>
<rect x="73.76" y="661.21" width="7.02" height="8.77" fill="#a8c790"/>
<rect x="80.78" y="661.21" width="7.02" height="8.77" fill="#acc88f"/>
<rect x="87.80" y="661.21" width="7.02" height="8.77" fill="#a9c78f"/>
<rect x="94.82" y="661.21" width="7.02" height="8.77" fill="#a1c48d"/>
<rect x="101.84" y="661.21" width="7.02" height="8.77" fill="#9dc58e"/>
<rect x="108.86" y="661.21" width="7.02" height="8.77" fill="#98c28b"/>
<rect x="115.88" y="661.21" width="7.02" height="8.77" fill="#9ac48d"/>
<rect x="122.90" y="661.21" width="7.02" height="8.77" fill="#a1c993"/>
<rect x="129.92" y="661.21" width="7.02" height="8.77" fill="#9ec690"/>
<rect x="136.94" y="661.21" width="7.02" height="8.77" fill="#a4cc96"/>
<rect x="143.96" y="661.21" width="7.02" height="8.77" fill="#a1c893"/>
<rect x="150.98" y="661.21" width="7.02" height="8.77" fill="#a7ce99"/>
<rect x="158.00" y="661.21" width="14.04" height="8.77" fill="#a5cc97"/>
<rect x="172.04" y="661.21" width="7.02" height="8.77" fill="#a2c994"/>
<rect x="179.06" y="661.21" width="7.02" height="8.77" fill="#a1c893"/>
<rect x="186.08" y="661.21" width="7.02" height="8.77" fill="#a6cd98"/>
<rect x="193.10" y="661.21" width="14.04" height="8.77" fill="#a2c994"/>
<rect x="207.14" y="661.21" width="14.04" height="8.77" fill="#a6cd98"/>
<rect x="221.18" y="661.21" width="7.02" height="8.77" fill="#a1c893"/>
<rect x="228.20" y="661.21" width="7.02" height="8.77" fill="#a7ce99"/>
<rect x="235.22" y="661.21" width="7.02" height="8.77" fill="#a4cb96"/>
<rect x="73.76" y="669.98" width="7.02" height="8.77" fill="#a3c993"/>
<rect x="80.78" y="669.98" width="7.02" height="8.77" fill="#a1c690"/>
<rect x="87.80" y="669.98" width="7.02" height="8.77" fill="#a1c790"/>
<rect x="94.82" y="669.98" width="7.02" height="8.77" fill="#a2c992"/>
<rect x="101.84" y="669.98" width="7.02" height="8.77" fill="#9cc48e"/>
<rect x="108.86" y="669.98" width="7.02" height="8.77" fill="#9bc48d"/>
<rect x="115.88" y="669.98" width="7.02" height="8.77" fill="#9cc48e"/>
<rect x="122.90" y="669.98" width="7.02" height="8.77" fill="#9dc58f"/>
<rect x="129.92" y="669.98" width="7.02" height="8.77" fill="#a0c892"/>
<rect x="136.94" y="669.98" width="7.02" height="8.77" fill="#a5cc97"/>
<rect x="143.96" y="669.98" width="7.02" height="8.77" fill="#a1c893"/>
<rect x="150.98" y="669.98" width="7.02" height="8.77" fill="#a2c994"/>
<rect x="158.00" y="669.98" width="21.06" height="8.77" fill="#a7ce99"/>
<rect x="179.06" y="669.98" width="7.02" height="8.77" fill="#a2c994"/>
<rect x="186.08" y="669.98" width="7.02" height="8.77" fill="#a3ca95"/>
<rect x="193.10" y="669.98" width="7.02" height="8.77" fill="#a7ce99"/>
<rect x="200.12" y="669.98" width="7.02" height="8.77" fill="#a4cb96"/>
<rect x="207.14" y="669.98" width="7.02" height="8.77" fill="#a5cc97"/>
<rect x="214.16" y="669.98" width="7.02" height="8.77" fill="#a3ca95"/>
<rect x="221.18" y="669.98" width="7.02" height="8.77" fill="#a1c893"/>
<rect x="228.20" y="669.98" width="7.02" height="8.77" fill="#a3ca95"/>
<rect x="235.22" y="669.98" width="7.02" height="8.77" fill="#a5cc97"/>
<rect x="73.76" y="678.75" width="7.02" height="8.77" fill="#a3ca95"/>
<rect x="80.78" y="678.75" width="7.02" height="8.77" fill="#a0c892"/>
<rect x="87.80" y="678.75" width="14.04" height="8.77" fill="#9ec790"/>
<rect x="101.84" y="678.75" width="7.02" height="8.77" fill="#9ec690"/>
<rect x="108.86" y="678.75" width="7.02" height="8.77" fill="#9fc891"/>
<rect x="115.88" y="678.75" width="7.02" height="8.77" fill="#a2ca94"/>
<rect x="122.90" y="678.75" width="7.02" height="8.77" fill="#9fc791"/>
<rect x="129.92" y="678.75" width="7.02" height="8.77" fill="#a3ca95"/>
<rect x="136.94" y="678.75" width="14.04" height="8.77" fill="#a6cd98"/>
<rect x="150.98" y="678.75" width="7.02" height="8.77" fill="#a2c994"/>
<rect x="158.00" y="678.75" width="7.02" height="8.77" fill="#a7ce99"/>
<rect x="165.02" y="678.75" width="7.02" height="8.77" fill="#a6cd98"/>
<rect x="172.04" y="678.75" width="7.02" height="8.77" fill="#a2c994"/>
<rect x="179.06" y="678.75" width="7.02" height="8.77" fill="#a3ca95"/>
<rect x="186.08" y="678.75" width="7.02" height="8.77" fill="#a2c994"/>
<rect x="193.10" y="678.75" width="7.02" height="8.77" fill="#a1c893"/>
<rect x="200.12" y="678.75" width="7.02" height="8.77" fill="#a7ce99"/>
<rect x="207.14" y="678.75" width="7.02" height="8.77" fill="#a3ca95"/>
<rect x="214.16" y="678.75" width="7.02" height="8.77" fill="#a6cd98"/>
<rect x="221.18" y="678.75" width="7.02" height="8.77" fill="#a2c994"/>
<rect x="228.20" y="678.75" width="7.02" height="8.77" fill="#a1c893"/>
<rect x="235.22" y="678.75" width="7.02" height="8.77" fill="#a6cd98"/>
<rect x="73.76" y="687.52" width="14.04" height="8.77" fill="#a1c993"/>
<rect x="87.80" y="687.52" width="7.02" height="8.77" fill="#9ec791"/>
<rect x="94.82" y="687.52" width="7.02" height="8.77" fill="#9ec690"/>
<rect x="101.84" y="687.52" width="7.02" height="8.77" fill="#a0c993"/>
<rect x="108.86" y="687.52" width="7.02" height="8.77" fill="#9ec690"/>
<rect x="115.88" y="687.52" width="14.04" height="8.77" fill="#a2c994"/>
<rect x="129.92" y="687.52" width="7.02" height="8.77" fill="#a1c893"/>
<rect x="136.94" y="687.52" width="7.02" height="8.77" fill="#a4cb96"/>
<rect x="143.96" y="687.52" width="7.02" height="8.77" fill="#a3ca95"/>
<rect x="150.98" y="687.52" width="7.02" height="8.77" fill="#a4cb96"/>
<rect x="158.00" y="687.52" width="21.06" height="8.77" fill="#a3ca95"/>
<rect x="179.06" y="687.52" width="7.02" height="8.77" fill="#a5cc97"/>
<rect x="186.08" y="687.52" width="14.04" height="8.77" fill="#a7ce99"/>
<rect x="200.12" y="687.52" width="14.04" height="8.77" fill="#a6cd98"/>
<rect x="214.16" y="687.52" width="7.02" height="8.77" fill="#a3ca95"/>
<rect x="221.18" y="687.52" width="7.02" height="8.77" fill="#a7ce99"/>
<rect x="228.20" y="687.52" width="7.02" height="8.77" fill="#a3ca95"/>
<rect x="235.22" y="687.52" width="7.02" height="8.77" fill="#a2c994"/>
<rect x="73.76" y="696.29" width="7.02" height="8.77" fill="#9fc791"/>
<rect x="80.78" y="696.29" width="7.02" height="8.77" fill="#9fc891"/>
<rect x="87.80" y="696.29" width="7.02" height="8.77" fill="#9cc58e"/>
<rect x="94.82" y="696.29" width="7.02" height="8.77" fill="#9ec791"/>
<rect x="101.84" y="696.29" width="7.02" height="8.77" fill="#9ec690"/>
<rect x="108.86" y="696.29" width="7.02" height="8.77" fill="#a4cc96"/>
<rect x="115.88" y="696.29" width="7.02" height="8.77" fill="#a2ca94"/>
<rect x="122.90" y="696.29" width="7.02" height="8.77" fill="#a3ca95"/>
<rect x="129.92" y="696.29" width="7.02" height="8.77" fill="#a4cb96"/>
<rect x="136.94" y="696.29" width="7.02" height="8.77" fill="#a6cd98"/>
<rect x="143.96" y="696.29" width="7.02" height="8.77" fill="#a7ce99"/>
<rect x="150.98" y="696.29" width="14.04" height="8.77" fill="#a4cb96"/>
<rect x="165.02" y="696.29" width="7.02" height="8.77" fill="#a5cc97"/>
<rect x="172.04" y="696.29" width="7.02" height="8.77" fill="#a1c893"/>
<rect x="179.06" y="696.29" width="7.02" height="8.77" fill="#a4cb96"/>
<rect x="186.08" y="696.29" width="14.04" height="8.77" fill="#a6cd98"/>
<rect x="200.12" y="696.29" width="7.02" height="8.77" fill="#a1c893"/>
<rect x="207.14" y="696.29" width="7.02" height="8.77" fill="#a6cd98"/>
<rect x="214.16" y="696.29" width="7.02" height="8.77" fill="#a3ca95"/>
<rect x="221.18" y="696.29" width="7.02" height="8.77" fill="#a7ce99"/>
<rect x="228.20" y="696.29" width="7.02" height="8.77" fill="#a3ca95"/>
<rect x="235.22" y="696.29" width="7.02" height="8.77" fill="#a2c994"/>
<rect x="73.76" y="705.06" width="7.02" height="8.77" fill="#a0c892"/>
<rect x="80.78" y="705.06" width="7.02" height="8.77" fill="#a1c993"/>
<rect x="87.80" y="705.06" width="7.02" height="8.77" fill="#9ec690"/>
<rect x="94.82" y="705.06" width="7.02" height="8.77" fill="#a1ca93"/>
<rect x="101.84" y="705.06" width="7.02" height="8.77" fill="#a2ca94"/>
<rect x="108.86" y="705.06" width="7.02" height="8.77" fill="#a1c993"/>
<rect x="115.88" y="705.06" width="7.02" height="8.77" fill="#a2c994"/>
<rect x="122.90" y="705.06" width="7.02" height="8.77" fill="#a4cb96"/>
<rect x="129.92" y="705.06" width="14.04" height="8.77" fill="#a3ca95"/>
<rect x="143.96" y="705.06" width="7.02" height="8.77" fill="#a5cc97"/>
<rect x="150.98" y="705.06" width="7.02" height="8.77" fill="#a6cd98"/>
<rect x="158.00" y="705.06" width="7.02" height="8.77" fill="#a5cc97"/>
<rect x="165.02" y="705.06" width="14.04" height="8.77" fill="#a2c994"/>
<rect x="179.06" y="705.06" width="7.02" height="8.77" fill="#a3ca95"/>
<rect x="186.08" y="705.06" width="7.02" height="8.77" fill="#a5cc97"/>
<rect x="193.10" y="705.06" width="7.02" height="8.77" fill="#a2c994"/>
<rect x="200.12" y="705.06" width="7.02" height="8.77" fill="#a1c893"/>
<rect x="207.14" y="705.06" width="14.04" height="8.77" fill="#a3ca95"/>
<rect x="221.18" y="705.06" width="7.02" height="8.77" fill="#a1c893"/>
<rect x="228.20" y="705.06" width="7.02" height="8.77" fill="#a4cb96"/>
<rect x="235.22" y="705.06" width="7.02" height="8.77" fill="#a7ce99"/>
<rect x="73.76" y="713.83" width="7.02" height="8.77" fill="#a2c994"/>
<rect x="80.78" y="713.83" width="7.02" height="8.77" fill="#a2ca94"/>
<rect x="87.80" y="713.83" width="14.04" height="8.77" fill="#a3cb95"/>
<rect x="101.84" y="713.83" width="7.02" height="8.77" fill="#a4cc97"/>
<rect x="108.86" y="713.83" width="7.02" height="8.77" fill="#a2ca95"/>
<rect x="115.88" y="713.83" width="7.02" height="8.77" fill="#a5cc97"/>
<rect x="122.90" y="713.83" width="7.02" height="8.77" fill="#a2c994"/>
<rect x="129.92" y="713.83" width="7.02" height="8.77" fill="#a6cd98"/>
<rect x="136.94" y="713.83" width="7.02" height="8.77" fill="#a3ca95"/>
<rect x="143.96" y="713.83" width="7.02" height="8.77" fill="#a4cb96"/>
<rect x="150.98" y="713.83" width="7.02" height="8.77" fill="#a6cd98"/>
<rect x="158.00" y="713.83" width="7.02" height="8.77" fill="#a3ca95"/>
<rect x="165.02" y="713.83" width="7.02" height="8.77" fill="#a2c994"/>
<rect x="172.04" y="713.83" width="7.02" height="8.77" fill="#a6cd98"/>
<rect x="179.06" y="713.83" width="7.02" height="8.77" fill="#a5cc97"/>
<rect x="186.08" y="713.83" width="7.02" height="8.77" fill="#a2c994"/>
<rect x="193.10" y="713.83" width="7.02" height="8.77" fill="#a1c893"/>
<rect x="200.12" y="713.83" width="7.02" height="8.77" fill="#a3ca95"/>
<rect x="207.14" y="713.83" width="7.02" height="8.77" fill="#a1c893"/>
<rect x="214.16" y="713.83" width="7.02" height="8.77" fill="#a6cd98"/>
<rect x="221.18" y="713.83" width="7.02" height="8.77" fill="#a2c994"/>
<rect x="228.20" y="713.83" width="14.04" height="8.77" fill="#a3ca95"/>
<rect x="73.76" y="722.60" width="7.02" height="8.77" fill="#a3ca95"/>
<rect x="80.78" y="722.60" width="7.02" height="8.77" fill="#a2ca94"/>
<rect x="87.80" y="722.60" width="7.02" height="8.77" fill="#a3cb95"/>
<rect x="94.82" y="722.60" width="7.02" height="8.77" fill="#a4cb96"/>
<rect x="101.84" y="722.60" width="7.02" height="8.77" fill="#a3ca95"/>
<rect x="108.86" y="722.60" width="7.02" height="8.77" fill="#a1c893"/>
<rect x="115.88" y="722.60" width="7.02" height="8.77" fill="#a7ce99"/>
<rect x="122.90" y="722.60" width="7.02" height="8.77" fill="#a5cc97"/>
<rect x="129.92" y="722.60" width="7.02" height="8.77" fill="#a1c893"/>
<rect x="136.94" y="722.60" width="7.02" height="8.77" fill="#a4cb96"/>
<rect x="143.96" y="722.60" width="7.02" height="8.77" fill="#a6cd98"/>
<rect x="150.98" y="722.60" width="7.02" height="8.77" fill="#a7ce99"/>
<rect x="158.00" y="722.60" width="14.04" height="8.77" fill="#a1c893"/>
<rect x="172.04" y="722.60" width="14.04" height="8.77" fill="#a4cb96"/>
<rect x="186.08" y="722.60" width="14.04" height="8.77" fill="#a6cd98"/>
<rect x="200.12" y="722.60" width="7.02" height="8.77" fill="#a3ca95"/>
<rect x="207.14" y="722.60" width="14.04" height="8.77" fill="#a4cb96"/>
<rect x="221.18" y="722.60" width="7.02" height="8.77" fill="#a6cd98"/>
<rect x="228.20" y="722.60" width="7.02" height="8.77" fill="#a2c994"/>
<rect x="235.22" y="722.60" width="7.02" height="8.77" fill="#a3ca95"/>
<g fill="#e0f1fd">
<rect x="101.84" y="336.72" width="14.04" height="8.77"/>
<rect x="122.90" y="327.95" width="7.02" height="8.77"/>
<rect x="136.94" y="345.49" width="7.02" height="8.77"/>
<rect x="143.96" y="354.26" width="7.02" height="8.77"/>
<rect x="150.98" y="363.03" width="7.02" height="8.77"/>
<rect x="101.84" y="433.19" width="7.02" height="8.77"/>
<rect x="115.88" y="468.27" width="7.02" height="8.77"/>
<rect x="129.92" y="494.58" width="7.02" height="8.77"/>
<rect x="143.96" y="503.35" width="7.02" height="8.77"/>
<rect x="150.98" y="512.12" width="14.04" height="8.77"/>
<rect x="165.02" y="520.89" width="7.02" height="8.77"/>
<rect x="193.10" y="520.89" width="7.02" height="8.77"/>
<rect x="207.14" y="591.05" width="7.02" height="8.77"/>
<rect x="214.16" y="608.59" width="7.02" height="8.77"/>
</g>
</g>
<path d="M83,330.7 L84.4,330.7 L89.8,327.3 L93.7,327 L96.1,328.3 L100.5,329.3 L103.4,332.7 L103.9,338.6 L105.9,334.2 L108.3,336.1 L111.3,338.6 L113.2,335.6 L114.7,330.7 L116.1,327.3 L123,327 L125.9,330.7 L129.8,338.6 L133.7,344.4 L138.6,350.3 L144.5,354.7 L151.8,360 L152.8,363 L157.1,368.8 L155.2,371.8 L158.1,376.6 L165,377.6 L166.9,379.6 L164,384.5 L163,389.3 L158.1,390.3 L154.2,392.3 L148.4,386.4 L142.5,380.5 L138.6,382.5 L136.2,386.4 L136.6,390.3 L138.1,395.2 L138.6,400.1 L141.5,403.5 L139.6,407.9 L135.7,408.4 L132.7,404 L130.8,396.2 L131.8,388.4 L128.8,382.5 L127.9,378.6 L124,378.1 L121,381.5 L111.3,384.5 L108.3,388.4 L109.3,394.2 L112.2,400.1 L107.3,404 L103.4,408.9 L101.5,413.9 L102,416.8 L103.9,419.8 L103.4,424.6 L104.4,435.4 L107.3,438.3 L112.2,443.2 L117.1,447.6 L118.1,450.5 L115.6,451.5 L116.1,453.9 L117.1,460.8 L117.6,467.6 L122,473.5 L127.9,476.9 L134.7,476.4 L138.6,473.5 L139.1,468.6 L144.5,466.6 L148.4,469.6 L151.3,475.4 L154.7,480.3 L153.2,482.3 L148.4,480.3 L142.5,477.4 L137.6,480.3 L134.7,486.2 L134.7,492 L137.6,499.8 L142.9,505.4 L150.4,512.9 L156.9,515 L165.4,519.3 L171.9,523.1 L176.2,520.9 L184.8,519.3 L192.3,519.9 L196.6,521.5 L199.8,526.9 L202,532.2 L203,549.4 L199.8,555.9 L197.7,560.2 L194.5,562.3 L194.5,564.5 L198.8,568.8 L200.9,573 L199.8,576.3 L196.6,578.4 L194.5,575.2 L193.4,570.9 L190.2,568.8 L183.7,566.6 L180.5,570.9 L177.3,576.8 L179.4,581.6 L182.6,589.2 L188,598.8 L192.3,599.4 L196.6,594.5 L204.1,589.2 L208.4,593.5 L213.8,595.6 L217,601 L219,606.4 L225.3,615.3 L231.7,624.2 L233,630.6 L229.2,632.5 L220.2,632.5 L213.9,631.2 L207.5,624.2 L203,619.8 L197.3,623.6 L190.9,628.7 L188.4,632.5 L188.4,630 L184.5,627.4 L180.7,629.3 L174.3,633.8 L173.7,637 L175.6,642.1 L172.4,645.3 L176.2,648.4 L175.6,651.6 L171.8,654.8 L166.7,657.4 L169.2,661.2 L168,663.1 L161.6,663.7 L153.9,665.7 L147.6,663.7 L139.9,670.1 L133.5,675.2 L125.9,673.9 L123.3,679 L124.6,682.9 L120.8,684.1 L114.4,686.7 L105.5,693.1 L102.9,698.2 L99.1,700.7 L95.3,710.9 L93.4,715.4 L87.6,717.3 L83.8,719.2 L83,719.5 Z" fill="none" stroke="#434d48" stroke-width="1.15" stroke-linejoin="round"/>
<ellipse cx="160.1" cy="393.7" rx="2.2" ry="1.8" fill="#a4cb96" stroke="#434d48" stroke-width="1"/>
<circle cx="203.9" cy="572" r="1.5" fill="#a4cb96" stroke="#434d48" stroke-width="1"/>
<ellipse cx="207" cy="576.2" rx="2.2" ry="1.8" fill="#a4cb96" stroke="#434d48" stroke-width="1"/>
<circle cx="170.5" cy="657.4" r="1.4" fill="#a4cb96" stroke="#434d48" stroke-width="0.9"/>
<path d="M83,36 L88,36 L86,42 L88,44 L85,45 L83,44 Z" fill="#9dc88e" stroke="#3d4a45" stroke-width="0.8"/>
</g>
<!-- grid -->
<g stroke="#3a4248" stroke-width="1.2">
<line x1="368.6" y1="36" x2="368.6" y2="987"/>
<line x1="789.7" y1="36" x2="789.7" y2="987"/>
<line x1="83" y1="108.45" x2="1172" y2="108.45"/>
<line x1="83" y1="634.9" x2="1172" y2="634.9"/>
</g>

<!-- Siracusa + star -->
<circle cx="180" cy="548" r="2.3" fill="#c9a9c9" stroke="#806080" stroke-width="0.8"/>
<path d="M185.5,550.5 L187.5,546.5 L189.5,550.5 Z" fill="#000"/>
<text x="158.3" y="547.3" font-size="15.5" fill="#000" textLength="55.5" lengthAdjust="spacingAndGlyphs">Siracusa</text>
<path d="M207.00,518.20 L211.42,531.81 L225.74,531.81 L214.16,540.23 L218.58,553.84 L207.00,545.43 L195.42,553.84 L199.84,540.23 L188.26,531.81 L202.58,531.81 Z" fill="none" stroke="#000" stroke-width="4.3" stroke-linejoin="miter" stroke-miterlimit="10"/>

<!-- INGV logo -->
<g clip-path="url(#globeclip)">
<rect x="100" y="46" width="64" height="64" fill="url(#globeb)"/>
<path d="M135.3,61.3 L141.9,49.5 L151,54.5 Z" fill="#1e9a3c"/>
<path d="M135.3,61.3 Q143,57 150.6,55.8 L151.3,64.8 L136.9,62.3 Z" fill="#e3122b"/>
<path d="M150.6,54 L163,60 L163,72.5 L160.5,72.3 L151.3,64.8 Z" fill="#d6c6d9"/>
<path d="M160,70.5 L164,71 L164,77 L161.9,76.5 Z" fill="#1e9a3c"/>
<path d="M136.9,62.3 L151.3,64.8 L145.6,71.8 Z" fill="#1e9a3c"/>
<path d="M135.5,62 L145.6,71.8 L145,72.9 L135.3,74.3 Z" fill="#f2e31c"/>
<path d="M145.6,71.8 L151.3,64.8 L159.6,72.6 L151.3,84.2 Z" fill="#f2e31c"/>
<path d="M159.6,72.6 L164,76 L164,92 L154.4,96.8 L151.3,84.2 Z" fill="#d6c6d9"/>
<path d="M153.5,95.5 L158.5,92 L156,97 Z" fill="#e3122b"/>
<path d="M135.3,74.3 L145,72.9 L151.3,84.2 L134.4,89.2 Z" fill="url(#redg)"/>
<path d="M134.4,89.2 L151.3,84.2 L154.4,96.8 L154.1,98 L140,112 L131.9,112 Z" fill="url(#greeng)"/>
</g>
<g clip-path="url(#globeclip)" stroke="#f4f8fa" stroke-width="0.75" fill="none" stroke-linecap="round">
<path d="M135.3,61.3 Q134.6,75 134.3,89.5 Q133.2,100 131.9,108.5"/>
<path d="M127.5,48.6 Q131.5,54 135.3,61.3 L141.9,49.5"/>
<path d="M101.5,78.8 Q106,70 118.7,64.1 Q127,61.5 135.3,61.3"/>
<path d="M127.5,50.4 Q121,52.5 120,56 Q118.5,63 119.4,64.1 Q121,69 123.7,71 Q128,73.6 135.3,74.3"/>
<path d="M108.5,57.4 Q115,55.5 120.6,56 Q128,57 135.3,61.3"/>
<path d="M135.3,61.3 Q129,65 125,71.6 Q120.5,78 117.5,84.7 Q114.5,92 112.3,99.5"/>
<path d="M108.1,61.6 Q107.8,68 109.4,74.1 Q112,79 116.2,83.5 Q120,86.5 125,87.9 Q130,89.3 134.4,89.4"/>
<path d="M103.1,83.5 Q105,88 107.5,91.6 Q111,95.5 114.4,97.9 Q120,100.5 125,101.6 Q129,102.7 133.7,102.9 Q144,101 153.1,97.3"/>
<path d="M136.9,62.3 L151.3,64.8 L145.6,71.8 L135.3,74.3"/>
<path d="M135.3,61.3 Q143,57 150.6,55.8 L151.3,64.8 L160,72.3"/>
<path d="M141.9,49.5 L151,54.5"/>
<path d="M135.3,61.3 L145.6,71.8 L151.3,84.2 L160.5,72.5"/>
<path d="M134.4,89.2 L151.3,84.2 L154.4,96.8"/>
<path d="M151.3,84.2 L162,77"/>
</g>
<g fill="#35383d" stroke="#35383d" stroke-width="0.55" font-size="13.6">
<text transform="translate(169.6,74.9) scale(0.55,1)" letter-spacing="1.3">ISTITUTO NAZIONALE</text>
<text transform="translate(169.6,89.4) scale(0.55,1)" letter-spacing="1.3">DI GEOFISICA E VULCANOLOGIA</text>
</g>

<!-- info box -->
<rect x="768.5" y="46.5" width="386" height="61.5" fill="#fff" stroke="#000" stroke-width="1"/>
<g font-size="12.2" fill="#000">
<text x="773.5" y="59.9" textLength="366.8" lengthAdjust="spacingAndGlyphs">Terremoto del 04-04-2013 13:12:28 (ora locale) ML=2.5 Prof=25 km</text>
<text x="773.5" y="74.8" textLength="380" lengthAdjust="spacingAndGlyphs">Mappa preliminare delle intensità macrosismiche stimate nelle località</text>
<text x="773.5" y="89.7" textLength="364" lengthAdjust="spacingAndGlyphs">Dati non verificati estratti da 3 questionari compilati tramite Internet.</text>
<text x="773.5" y="104.6" textLength="290.5" lengthAdjust="spacingAndGlyphs">Ultimo aggiornamento: 30-12-2025 02:39 (ora locale)</text>
</g>

<!-- legend -->
<rect x="1051.5" y="171.5" width="103" height="600.5" fill="#fff" stroke="#000" stroke-width="1"/>
<g font-size="12.3" font-weight="bold" fill="#000" text-anchor="middle">
<text x="1102.4" y="188" textLength="38" lengthAdjust="spacingAndGlyphs">Scala</text>
<text x="1102.8" y="203.6" textLength="58.5" lengthAdjust="spacingAndGlyphs">Europea</text>
<text x="1102.5" y="219.5" textLength="41.5" lengthAdjust="spacingAndGlyphs">(EMS)</text>
<text x="1103" y="585.6" textLength="56.5" lengthAdjust="spacingAndGlyphs">Numero</text>
<text x="1101.8" y="605.3" textLength="82" lengthAdjust="spacingAndGlyphs">questionari</text>
<text x="1105.6" y="712.8" textLength="68" lengthAdjust="spacingAndGlyphs">Epicentro</text>
<text x="1105.9" y="728.6" textLength="89" lengthAdjust="spacingAndGlyphs">Strumentale</text>
</g>
<rect x="1073.5" y="229.5" width="57" height="19" fill="#a5a5a5" stroke="#000" stroke-width="1"/>
<text x="1102" y="243" text-anchor="middle" font-size="12.3" font-weight="bold" fill="#ffffff" textLength="35.5" lengthAdjust="spacingAndGlyphs">n.a.*</text>
<rect x="1073.5" y="253.5" width="57" height="19" fill="#5066ae" stroke="#000" stroke-width="1"/>
<text x="1102" y="267" text-anchor="middle" font-size="12.3" font-weight="bold" fill="#ffffff" textLength="9.0" lengthAdjust="spacingAndGlyphs">II</text>
<rect x="1073.5" y="277.5" width="57" height="19" fill="#0033c4" stroke="#0033c4" stroke-width="1"/>
<text x="1102" y="291" text-anchor="middle" font-size="12.3" font-weight="bold" fill="#ffffff" textLength="13.5" lengthAdjust="spacingAndGlyphs">III</text>
<rect x="1073.5" y="301.5" width="57" height="19" fill="#0a6bd2" stroke="#000" stroke-width="1"/>
<text x="1102" y="315" text-anchor="middle" font-size="12.3" font-weight="bold" fill="#ffffff" textLength="35.5" lengthAdjust="spacingAndGlyphs">III-IV</text>
<rect x="1073.5" y="325.5" width="57" height="19" fill="#0a9ae6" stroke="#000" stroke-width="1"/>
<text x="1102" y="339" text-anchor="middle" font-size="12.3" font-weight="bold" fill="#ffffff" textLength="15.8" lengthAdjust="spacingAndGlyphs">IV</text>
<rect x="1073.5" y="349.5" width="57" height="19" fill="#00c67a" stroke="#000" stroke-width="1"/>
<text x="1102" y="363" text-anchor="middle" font-size="12.3" font-weight="bold" fill="#000000" textLength="29.3" lengthAdjust="spacingAndGlyphs">IV-V</text>
<rect x="1073.5" y="373.5" width="57" height="19" fill="#00f000" stroke="#000" stroke-width="1"/>
<text x="1102" y="387" text-anchor="middle" font-size="12.3" font-weight="bold" fill="#000000" textLength="10.6" lengthAdjust="spacingAndGlyphs">V</text>
<rect x="1073.5" y="397.5" width="57" height="19" fill="#bbf000" stroke="#000" stroke-width="1"/>
<text x="1102" y="411" text-anchor="middle" font-size="12.3" font-weight="bold" fill="#000000" textLength="29.0" lengthAdjust="spacingAndGlyphs">V-VI</text>
<rect x="1074.5" y="422.5" width="57" height="19" fill="#fff200" stroke="#000" stroke-width="1"/>
<text x="1103" y="436" text-anchor="middle" font-size="12.3" font-weight="bold" fill="#000000" textLength="15.0" lengthAdjust="spacingAndGlyphs">VI</text>
<rect x="1074.5" y="446.5" width="57" height="19" fill="#ffc800" stroke="#000" stroke-width="1"/>
<text x="1103" y="460" text-anchor="middle" font-size="12.3" font-weight="bold" fill="#000000" textLength="39.5" lengthAdjust="spacingAndGlyphs">VI-VII</text>
<rect x="1074.5" y="470.5" width="57" height="19" fill="#ffa600" stroke="#000" stroke-width="1"/>
<text x="1103" y="484" text-anchor="middle" font-size="12.3" font-weight="bold" fill="#000000" textLength="18.6" lengthAdjust="spacingAndGlyphs">VII</text>
<rect x="1074.5" y="494.5" width="57" height="19" fill="#ff6e00" stroke="#000" stroke-width="1"/>
<text x="1103" y="508" text-anchor="middle" font-size="12.3" font-weight="bold" fill="#000000" textLength="47.8" lengthAdjust="spacingAndGlyphs">VII-VIII</text>
<rect x="1074.5" y="518.5" width="57" height="19" fill="#ff0000" stroke="#000" stroke-width="1"/>
<text x="1103" y="532" text-anchor="middle" font-size="12.3" font-weight="bold" fill="#000000" textLength="24.9" lengthAdjust="spacingAndGlyphs">VIII</text>
<g font-size="12.3" fill="#000" text-anchor="middle">
<text x="1104.6" y="556.7" textLength="92" lengthAdjust="spacingAndGlyphs">*non avvertito</text>
<text x="1077.5" y="641.6" textLength="19.5" lengthAdjust="spacingAndGlyphs">1-2</text>
<text x="1126.5" y="641.6" textLength="20" lengthAdjust="spacingAndGlyphs">3-9</text>
<text x="1078.6" y="680.7" textLength="35.5" lengthAdjust="spacingAndGlyphs">10-49</text>
<text x="1127.7" y="681.5" textLength="25.5" lengthAdjust="spacingAndGlyphs">≥50</text>
</g>
<g stroke="#000" stroke-width="1.1" stroke-dasharray="2.3 1.3">
<line x1="1055" y1="569.5" x2="1153" y2="569.5"/>
<line x1="1055" y1="692.5" x2="1153" y2="692.5"/>
</g>
<g fill="none" stroke="#000" stroke-width="1.6">
<circle cx="1077.7" cy="623.7" r="3.6"/>
<circle cx="1125.1" cy="623" r="5"/>
<circle cx="1077.8" cy="657.8" r="8.1"/>
<circle cx="1125.5" cy="656.5" r="10.5"/>
</g>
<path d="M1105.00,741.60 L1107.16,748.23 L1114.13,748.23 L1108.49,752.33 L1110.64,758.97 L1105.00,754.87 L1099.36,758.97 L1101.51,752.33 L1095.87,748.23 L1102.84,748.23 Z" fill="none" stroke="#000" stroke-width="1.1"/>

<!-- scale bar -->
<g>
<rect x="150.7" y="930.7" width="189.7" height="5.7" fill="#fff" stroke="#000" stroke-width="1"/>
<rect x="150.7" y="930.7" width="47.8" height="5.7" fill="#000"/>
<rect x="245.5" y="930.7" width="48" height="5.7" fill="#000"/>
<g stroke="#000" stroke-width="1.2">
<line x1="150.9" y1="930.5" x2="150.9" y2="940.5"/>
<line x1="245.5" y1="930.5" x2="245.5" y2="940.5"/>
<line x1="340.2" y1="930.5" x2="340.2" y2="940.5"/>
</g>
<g font-size="21" fill="#000" text-anchor="middle">
<text x="150.7" y="964">0</text>
<text x="245.5" y="964">10</text>
<text x="340.4" y="964">20</text>
<text x="245.5" y="915.4" font-size="29">km</text>
</g>
</g>

<!-- HSIT logo -->
<g>
<circle cx="1095" cy="916" r="33.2" fill="#1d1d1d"/>
<circle cx="1095" cy="916.5" r="19.2" fill="none" stroke="#e3101e" stroke-width="6.4"/>
<circle cx="1095.9" cy="916.1" r="8.2" fill="#e3101e"/>
<path d="M1101,910 L1127.5,900.8 Q1131.2,899.8 1131.2,903.5 L1131.2,930 Q1131.2,934 1127.5,933 L1101,923.5 Z" fill="url(#blueg)"/>
<path d="M1101,920.5 L1131.2,927.8 L1131.2,930 Q1131.2,934 1127.5,933 L1101,923.5 Z" fill="#1669bb"/>
<circle cx="1144.7" cy="916.5" r="10" fill="#e3101e"/>
<text transform="translate(1144.7,916.3) rotate(90)" y="5.8" font-size="17" font-weight="bold" fill="#fff" text-anchor="middle">?</text>
<text transform="translate(1095,916) rotate(123) translate(0,-42.5) scale(0.86,1)" text-anchor="middle" font-size="19" font-weight="bold" fill="#e3101e">w</text>
<text transform="translate(1095,916) rotate(139) translate(0,-42.5) scale(0.86,1)" text-anchor="middle" font-size="19" font-weight="bold" fill="#e3101e">w</text>
<text transform="translate(1095,916) rotate(157) translate(0,-42.5) scale(0.86,1)" text-anchor="middle" font-size="19" font-weight="bold" fill="#e3101e">w</text>
<text transform="translate(1095,916) rotate(171.5) translate(0,-42.5) scale(0.86,1)" text-anchor="middle" font-size="20.5" font-weight="bold" fill="#e3101e">.</text>
<text transform="translate(1095,916) rotate(181) translate(0,-42.5) scale(0.86,1)" text-anchor="middle" font-size="20.5" font-weight="normal" fill="#1a1a1a">h</text>
<text transform="translate(1095,916) rotate(192.6) translate(0,-42.5) scale(0.86,1)" text-anchor="middle" font-size="20.5" font-weight="normal" fill="#1a1a1a">a</text>
<text transform="translate(1095,916) rotate(203.7) translate(0,-42.5) scale(0.86,1)" text-anchor="middle" font-size="20.5" font-weight="normal" fill="#333">/</text>
<text transform="translate(1095,916) rotate(210.5) translate(0,-42.5) scale(0.86,1)" text-anchor="middle" font-size="20.5" font-weight="bold" fill="#1a1a1a">s</text>
<text transform="translate(1095,916) rotate(224.7) translate(0,-42.5) scale(0.86,1)" text-anchor="middle" font-size="20.5" font-weight="bold" fill="#1a1a1a">e</text>
<text transform="translate(1095,916) rotate(236.9) translate(0,-42.5) scale(0.86,1)" text-anchor="middle" font-size="20.5" font-weight="bold" fill="#1a1a1a">n</text>
<text transform="translate(1095,916) rotate(248.1) translate(0,-42.5) scale(0.86,1)" text-anchor="middle" font-size="20.5" font-weight="bold" fill="#1a1a1a">t</text>
<text transform="translate(1095,916) rotate(255.2) translate(0,-42.5) scale(0.86,1)" text-anchor="middle" font-size="20.5" font-weight="bold" fill="#1a1a1a">i</text>
<text transform="translate(1095,916) rotate(263.7) translate(0,-42.5) scale(0.86,1)" text-anchor="middle" font-size="20.5" font-weight="bold" fill="#1a1a1a">t</text>
<text transform="translate(1095,916) rotate(274.7) translate(0,-42.5) scale(0.86,1)" text-anchor="middle" font-size="20.5" font-weight="bold" fill="#1a1a1a">o</text>
<text transform="translate(1095,916) rotate(286) translate(0,-42.5) scale(0.86,1)" text-anchor="middle" font-size="20.5" font-weight="normal" fill="#333">/</text>
<text transform="translate(1095,916) rotate(292.6) translate(0,-42.5) scale(0.86,1)" text-anchor="middle" font-size="20.5" font-weight="normal" fill="#333">/</text>
<text transform="translate(1095,916) rotate(300.9) translate(0,-42.5) scale(0.86,1)" text-anchor="middle" font-size="20.5" font-weight="bold" fill="#1a1a1a">t</text>
<text transform="translate(1095,916) rotate(312.9) translate(0,-42.5) scale(0.86,1)" text-anchor="middle" font-size="20.5" font-weight="bold" fill="#1a1a1a">e</text>
<text transform="translate(1095,916) rotate(323.7) translate(0,-42.5) scale(0.86,1)" text-anchor="middle" font-size="20.5" font-weight="bold" fill="#1a1a1a">r</text>
<text transform="translate(1095,916) rotate(332.2) translate(0,-42.5) scale(0.86,1)" text-anchor="middle" font-size="20.5" font-weight="bold" fill="#1a1a1a">r</text>
<text transform="translate(1095,916) rotate(342.7) translate(0,-42.5) scale(0.86,1)" text-anchor="middle" font-size="20.5" font-weight="bold" fill="#1a1a1a">e</text>
<text transform="translate(1095,916) rotate(356.7) translate(0,-42.5) scale(0.92,1)" text-anchor="middle" font-size="20.5" font-weight="bold" fill="#1a1a1a">m</text>
<text transform="translate(1095,916) rotate(370.3) translate(0,-42.5) scale(0.86,1)" text-anchor="middle" font-size="20.5" font-weight="bold" fill="#1a1a1a">o</text>
<text transform="translate(1095,916) rotate(382) translate(0,-42.5) scale(0.86,1)" text-anchor="middle" font-size="20.5" font-weight="bold" fill="#1a1a1a">t</text>
<text transform="translate(1095,916) rotate(396.4) translate(0,-42.5) scale(0.86,1)" text-anchor="middle" font-size="20.5" font-weight="bold" fill="#1a1a1a">o</text>
<text transform="translate(1095,916) rotate(406.9) translate(0,-42.5) scale(0.86,1)" text-anchor="middle" font-size="20.5" font-weight="bold" fill="#e3101e">.</text>
<text transform="translate(1095,916) rotate(415.9) translate(0,-42.5) scale(0.86,1)" text-anchor="middle" font-size="20.5" font-weight="bold" fill="#e3101e">i</text>
<text transform="translate(1095,916) rotate(422.1) translate(0,-42.5) scale(0.86,1)" text-anchor="middle" font-size="20.5" font-weight="bold" fill="#e3101e">t</text>
</g>

<!-- frame bands -->
<g fill="#000">
<rect x="83" y="26" width="285.6" height="9.5"/>
<rect x="789.7" y="26" width="382.5" height="9.5"/>
<rect x="83" y="987.5" width="285.6" height="9.5"/>
<rect x="789.7" y="987.5" width="382.5" height="9.5"/>
<rect x="73.5" y="108.45" width="9.5" height="526.45"/>
<rect x="1172.2" y="108.45" width="9.5" height="526.45"/>
</g>
<g fill="none" stroke="#000" stroke-width="1.2">
<rect x="73.5" y="25.5" width="1108.5" height="971.5" stroke="#222"/>
<path d="M82.8,25.5 V997 M1172.2,25.5 V997 M73.5,35.3 H1182 M73.5,987.3 H1182" stroke-width="1.1" stroke="#1a1a1a"/>
</g>
<!-- axis labels -->
<g font-size="23.4" fill="#000">
<text x="369" y="17" text-anchor="middle">15°30'</text>
<text x="790" y="17" text-anchor="middle">16°00'</text>
<text x="369" y="1023" text-anchor="middle">15°30'</text>
<text x="790" y="1023" text-anchor="middle">16°00'</text>
<text x="65" y="118" text-anchor="end">37°30'</text>
<text x="65" y="644.3" text-anchor="end">37°00'</text>
<text x="1191" y="118">37°30'</text>
<text x="1191" y="644.3">37°00'</text>
</g>
</svg>
</body></html>
